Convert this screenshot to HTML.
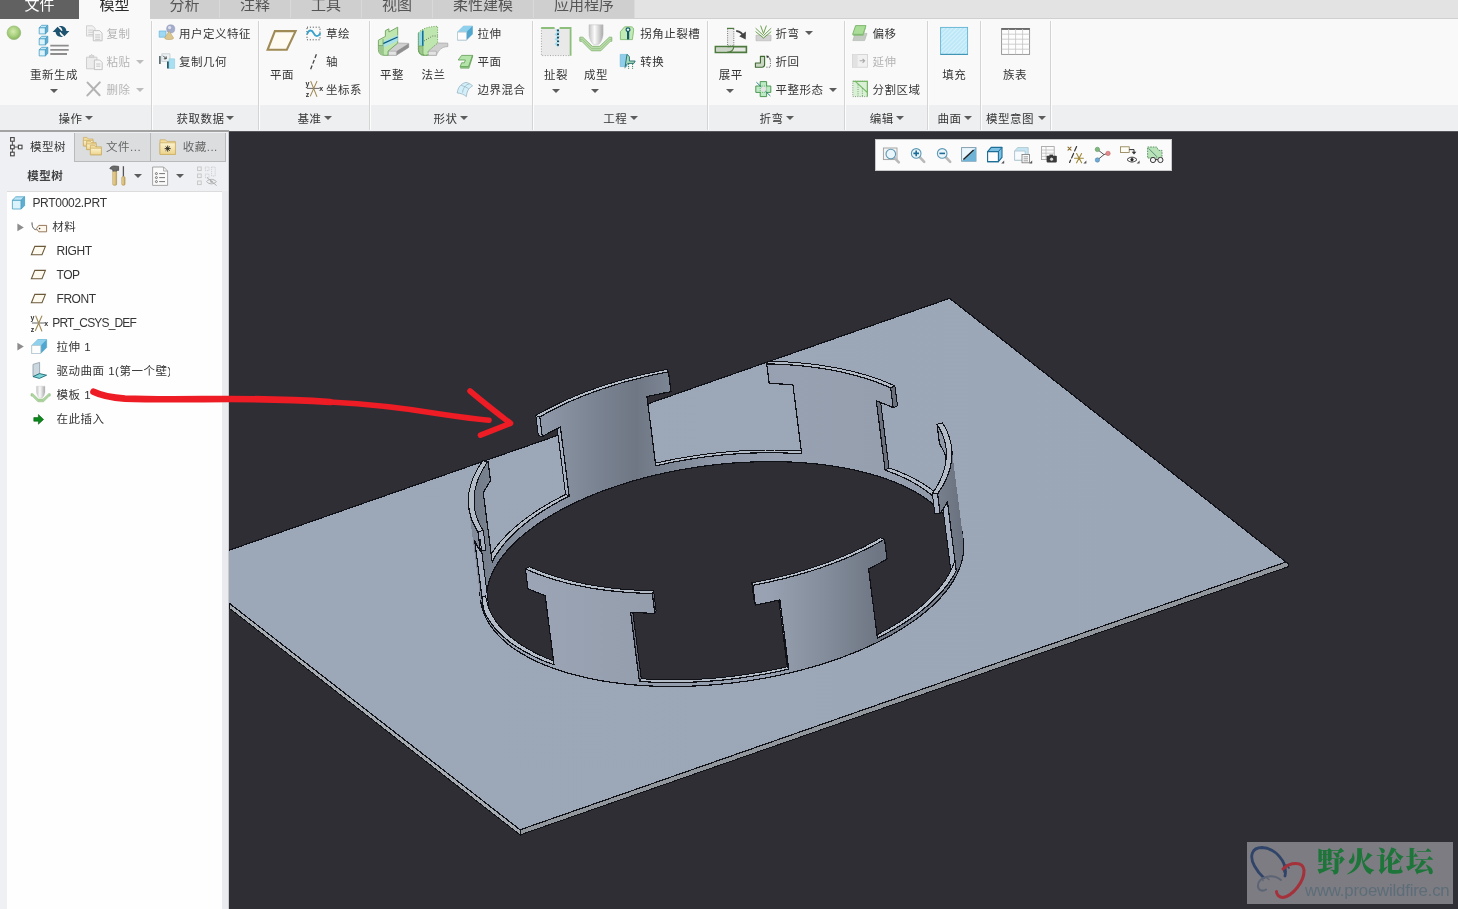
<!DOCTYPE html>
<html lang="zh-CN"><head><meta charset="utf-8"><title>Creo Parametric</title>
<style>
*{box-sizing:border-box;margin:0;padding:0}
html,body{width:1458px;height:909px;overflow:hidden;background:#2f2e34;}
body{position:relative;will-change:transform;font-family:"Liberation Sans", "Noto Sans CJK SC", sans-serif;font-size:12px;color:#333;}
.abs{position:absolute}
.t{position:absolute;white-space:nowrap;line-height:16px;height:16px;color:#353535;font-size:11.5px;letter-spacing:0.5px}
.tc{transform:translateX(-50%)}
.g{color:#b4b4b4}
.tab{position:absolute;top:0;height:18.5px;font-size:15px;line-height:20px;text-align:center;color:#5a5a5a;overflow:hidden}
.tab span{position:relative;top:-5px;display:block}
.sep{position:absolute;top:21px;width:1px;height:109px;background:#d4d4d4}
.sep2{position:absolute;top:21px;width:1px;height:109px;background:#fdfdfd}
.dd{position:absolute;width:0;height:0;border-left:4px solid transparent;border-right:4px solid transparent;border-top:4.5px solid #5c5c5c;margin-left:-0.5px}
.dd.gd{border-top-color:#bdbdbd}
svg{position:absolute;left:0;top:0;overflow:visible}
</style></head>
<body>
<div class="abs" style="left:0;top:0;width:1458px;height:18.5px;background:#e3e3e3"></div>
<div class="tab" style="left:0px;width:79px;background:#616161;color:#ffffff;"><span>文件</span></div>
<div class="tab" style="left:79px;width:71px;background:#f9f9f9;color:#2b2b2b;"><span>模型</span></div>
<div class="tab" style="left:150px;width:70px;background:#cfcfcf;color:#555;border-right:1px solid #d9d9d9;"><span>分析</span></div>
<div class="tab" style="left:220px;width:71px;background:#cfcfcf;color:#555;border-right:1px solid #d9d9d9;"><span>注释</span></div>
<div class="tab" style="left:291px;width:71px;background:#cfcfcf;color:#555;border-right:1px solid #d9d9d9;"><span>工具</span></div>
<div class="tab" style="left:362px;width:71px;background:#cfcfcf;color:#555;border-right:1px solid #d9d9d9;"><span>视图</span></div>
<div class="tab" style="left:433px;width:101px;background:#cfcfcf;color:#555;border-right:1px solid #d9d9d9;"><span>柔性建模</span></div>
<div class="tab" style="left:534px;width:101px;background:#cfcfcf;color:#555;border-right:1px solid #d9d9d9;"><span>应用程序</span></div>
<div class="abs" style="left:0;top:18.5px;width:1458px;height:87.5px;background:#f9f9f9"></div>
<div class="abs" style="left:0;top:105px;width:1458px;height:26px;background:#eeeff1"></div>
<div class="abs" style="left:0;top:130px;width:229px;height:2px;background:#a3a3a3"></div>
<div class="abs" style="left:229px;top:131px;width:1229px;height:1px;background:#55555a"></div>
<div class="abs" style="left:150px;top:18px;width:1308px;height:1px;background:#d0d0d0"></div>
<div class="sep" style="left:151px"></div><div class="sep2" style="left:152px"></div>
<div class="sep" style="left:258px"></div><div class="sep2" style="left:259px"></div>
<div class="sep" style="left:369px"></div><div class="sep2" style="left:370px"></div>
<div class="sep" style="left:532px"></div><div class="sep2" style="left:533px"></div>
<div class="sep" style="left:707px"></div><div class="sep2" style="left:708px"></div>
<div class="sep" style="left:844px"></div><div class="sep2" style="left:845px"></div>
<div class="sep" style="left:927px"></div><div class="sep2" style="left:928px"></div>
<div class="sep" style="left:980px"></div><div class="sep2" style="left:981px"></div>
<div class="sep" style="left:1050px"></div><div class="sep2" style="left:1051px"></div>
<div class="t  tc" style="left:54.0px;top:67.0px;">重新生成</div>
<div class="dd" style="left:50.0px;top:88.7px"></div>
<div class="t g" style="left:106.5px;top:26.0px;">复制</div>
<div class="t g" style="left:106.5px;top:54.0px;">粘贴</div>
<div class="dd gd" style="left:136.5px;top:60.0px"></div>
<div class="t g" style="left:106.5px;top:82.0px;">删除</div>
<div class="dd gd" style="left:136.5px;top:87.5px"></div>
<div class="t" style="left:58.5px;top:111.0px;">操作</div>
<div class="dd" style="left:85.1px;top:116.0px"></div>
<div class="t" style="left:178.9px;top:26.0px;">用户定义特征</div>
<div class="t" style="left:178.9px;top:54.0px;">复制几何</div>
<div class="t" style="left:176.5px;top:111.0px;">获取数据</div>
<div class="dd" style="left:226.5px;top:116.0px"></div>
<div class="t  tc" style="left:282.0px;top:67.0px;">平面</div>
<div class="t" style="left:326.0px;top:26.0px;">草绘</div>
<div class="t" style="left:326.0px;top:54.0px;">轴</div>
<div class="t" style="left:326.0px;top:82.0px;">坐标系</div>
<div class="t" style="left:297.6px;top:111.0px;">基准</div>
<div class="dd" style="left:324.1px;top:116.0px"></div>
<div class="t  tc" style="left:392.0px;top:67.0px;">平整</div>
<div class="t  tc" style="left:433.4px;top:67.0px;">法兰</div>
<div class="t" style="left:477.4px;top:26.0px;">拉伸</div>
<div class="t" style="left:477.4px;top:54.0px;">平面</div>
<div class="t" style="left:477.4px;top:82.0px;">边界混合</div>
<div class="t" style="left:433.6px;top:111.0px;">形状</div>
<div class="dd" style="left:460.8px;top:116.0px"></div>
<div class="t  tc" style="left:556.0px;top:67.0px;">扯裂</div>
<div class="dd" style="left:552.0px;top:89.0px"></div>
<div class="t  tc" style="left:595.9px;top:67.0px;">成型</div>
<div class="dd" style="left:591.7px;top:89.0px"></div>
<div class="t" style="left:640.3px;top:26.0px;">拐角止裂槽</div>
<div class="t" style="left:640.3px;top:54.0px;">转换</div>
<div class="t" style="left:603.3px;top:111.0px;">工程</div>
<div class="dd" style="left:630.1px;top:116.0px"></div>
<div class="t  tc" style="left:730.8px;top:67.0px;">展平</div>
<div class="dd" style="left:726.7px;top:89.0px"></div>
<div class="t" style="left:775.4px;top:26.0px;">折弯</div>
<div class="dd" style="left:805.7px;top:31.0px"></div>
<div class="t" style="left:775.4px;top:54.0px;">折回</div>
<div class="t" style="left:775.4px;top:82.0px;">平整形态</div>
<div class="dd" style="left:829.7px;top:87.5px"></div>
<div class="t" style="left:759.4px;top:111.0px;">折弯</div>
<div class="dd" style="left:786.1px;top:116.0px"></div>
<div class="t" style="left:872.6px;top:26.0px;">偏移</div>
<div class="t g" style="left:872.6px;top:54.0px;">延伸</div>
<div class="t" style="left:872.6px;top:82.0px;">分割区域</div>
<div class="t" style="left:869.7px;top:111.0px;">编辑</div>
<div class="dd" style="left:896.0px;top:116.0px"></div>
<div class="t  tc" style="left:954.2px;top:67.0px;">填充</div>
<div class="t" style="left:937.5px;top:111.0px;">曲面</div>
<div class="dd" style="left:964.1px;top:116.0px"></div>
<div class="t  tc" style="left:1014.9px;top:67.0px;">族表</div>
<div class="t" style="left:985.9px;top:111.0px;">模型意图</div>
<div class="dd" style="left:1038.1px;top:116.0px"></div>
<div class="abs" style="left:0;top:132px;width:229px;height:777px;background:#eef0f3"></div>
<div class="abs" style="left:74px;top:133px;width:152px;height:29px;background:#dcdddf;border:1px solid #b9babc;border-top:none"></div>
<div class="abs" style="left:150px;top:133px;width:1px;height:28px;background:#b9babc"></div>
<div class="abs" style="left:7px;top:191px;width:215px;height:718px;background:#fefefe;border-top:1px solid #dcdcdc"></div>
<div class="abs" style="left:222px;top:191px;width:7px;height:718px;background:#e9ebee"></div>
<div class="abs" style="left:228px;top:132px;width:1px;height:777px;background:#c8cacf"></div>
<div class="t" style="left:30.1px;top:139.0px;">模型树</div>
<div class="t" style="left:106.0px;top:139.0px;color:#666">文件...</div>
<div class="t" style="left:182.7px;top:139.0px;color:#666">收藏...</div>
<div class="t" style="left:27.2px;top:168.0px;font-weight:bold;color:#444">模型树</div>
<div class="dd" style="left:134.8px;top:174.0px"></div>
<div class="dd" style="left:176.7px;top:174.0px"></div>
<div class="t" style="left:32.4px;top:194.5px;font-size:12px;letter-spacing:-0.3px;">PRT0002.PRT</div>
<div class="t" style="left:52.3px;top:219.0px;">材料</div>
<div class="t" style="left:56.5px;top:242.5px;font-size:12px;letter-spacing:-0.45px;">RIGHT</div>
<div class="t" style="left:56.5px;top:266.5px;font-size:12px;letter-spacing:-0.45px;">TOP</div>
<div class="t" style="left:56.5px;top:290.5px;font-size:12px;letter-spacing:-0.45px;">FRONT</div>
<div class="t" style="left:52.3px;top:314.5px;font-size:12px;letter-spacing:-0.85px;">PRT_CSYS_DEF</div>
<div class="t" style="left:56.5px;top:339.0px;">拉伸 1</div>
<div class="t" style="left:56.5px;top:363.0px;width:113px;overflow:hidden;">驱动曲面 1(第一个壁)</div>
<div class="t" style="left:56.5px;top:387.0px;">模板 1</div>
<div class="t" style="left:56.5px;top:411.0px;">在此插入</div>
<div class="abs" style="left:875px;top:139px;width:297px;height:32px;background:#fbfbfb;border:1px solid #c9c9c9"></div>
<div class="abs" style="left:1247px;top:842px;width:206px;height:62px;background:#7c7c82"></div>
<div class="abs" style="left:1317px;top:845px;font-family:'Liberation Serif','Noto Serif CJK SC',serif;font-weight:900;font-size:28px;line-height:36px;color:#1d7539;white-space:nowrap;letter-spacing:1.5px">野火论坛</div>
<div class="abs" style="left:1305px;top:880px;font-size:16.8px;line-height:22px;color:#5d6d78;white-space:nowrap;letter-spacing:-0.2px">www.proewildfire.cn</div>
<svg width="1458" height="909" viewBox="0 0 1458 909">
<defs>
<linearGradient id="gPlate" gradientUnits="userSpaceOnUse" x1="229" y1="0" x2="1290" y2="0">
<stop offset="0" stop-color="#9ca7b8"/><stop offset="1" stop-color="#9ba6b7"/></linearGradient>
<linearGradient id="gInner" gradientUnits="userSpaceOnUse" x1="460" y1="0" x2="970" y2="0">
<stop offset="0" stop-color="#6d7582"/>
<stop offset="0.07" stop-color="#7b8492"/>
<stop offset="0.16" stop-color="#8e98a8"/>
<stop offset="0.27" stop-color="#7a8391"/>
<stop offset="0.345" stop-color="#6f7785"/>
<stop offset="0.41" stop-color="#7c8593"/>
<stop offset="0.50" stop-color="#8f99a9"/>
<stop offset="0.62" stop-color="#97a1b1"/>
<stop offset="0.85" stop-color="#959fae"/>
<stop offset="1" stop-color="#8c95a4"/>
</linearGradient>
<linearGradient id="gOuter" gradientUnits="userSpaceOnUse" x1="460" y1="0" x2="970" y2="0">
<stop offset="0" stop-color="#7a8290"/>
<stop offset="0.12" stop-color="#9ba5b5"/>
<stop offset="0.40" stop-color="#939dac"/>
<stop offset="0.60" stop-color="#98a2b2"/>
<stop offset="0.72" stop-color="#838c9a"/>
<stop offset="0.82" stop-color="#6e7684"/>
<stop offset="0.93" stop-color="#7a8290"/>
<stop offset="1" stop-color="#656c79"/>
</linearGradient>
</defs>
<defs><clipPath id="vpclip"><rect x="229" y="132" width="1229" height="777"/></clipPath>
<radialGradient id="gGreen" cx="0.45" cy="0.4" r="0.6"><stop offset="0" stop-color="#d4eab0"/><stop offset="0.6" stop-color="#a8d07c"/><stop offset="1" stop-color="#86b260"/></radialGradient>
<linearGradient id="gPunch" x1="0" y1="0" x2="1" y2="0"><stop offset="0" stop-color="#c4c4c4"/><stop offset="0.4" stop-color="#fbfbfb"/><stop offset="1" stop-color="#a9a9a9"/></linearGradient>
<linearGradient id="gBlueSq" x1="0" y1="0" x2="1" y2="1"><stop offset="0" stop-color="#c6ecfa"/><stop offset="1" stop-color="#a9e0f5"/></linearGradient>
<linearGradient id="gHandle" x1="0" y1="0" x2="1" y2="0"><stop offset="0" stop-color="#f3dfa4"/><stop offset="1" stop-color="#c9a75c"/></linearGradient>
<linearGradient id="gFolder" x1="0" y1="0" x2="0" y2="1"><stop offset="0" stop-color="#fdf3cf"/><stop offset="1" stop-color="#ecd38b"/></linearGradient>
<pattern id="hatch" width="3" height="3" patternUnits="userSpaceOnUse" patternTransform="rotate(45)"><rect width="3" height="3" fill="#bde8f7"/><rect width="1" height="3" fill="#d6f1fb"/></pattern>
</defs>
<g clip-path="url(#vpclip)" shape-rendering="crispEdges">
<path d="M229.0 603.1 L520.1 829.8 L520.1 834.9 L229.0 608.0 Z" fill="#a7abb2" stroke="#101017" stroke-width="1"/>
<path d="M520.1 829.8 L1286.0 562.0 L1288.6 563.7 L1288.6 566.6 L520.1 834.9 Z" fill="#92969d" stroke="#101017" stroke-width="1"/>
<path d="M228.0 550.6 L949.6 298.3 L1286.0 562.0 L520.1 829.8 L228.0 602.3 Z M930.2 497.4 L932.1 499.0 L934.0 500.5 L935.8 502.1 L937.5 503.7 L939.1 505.3 L940.7 507.0 L942.3 508.6 L943.7 510.3 L945.1 512.0 L946.4 513.7 L947.7 515.4 L948.8 517.2 L950.0 518.9 L951.0 520.7 L952.0 522.5 L952.9 524.3 L953.7 526.1 L954.5 527.9 L955.2 529.8 L955.8 531.6 L956.3 533.5 L956.8 535.4 L957.2 537.3 L957.5 539.2 L957.8 541.1 L958.0 543.0 L958.1 545.0 L958.2 546.9 L958.1 548.8 L958.0 550.8 L957.9 552.7 L957.6 554.7 L957.3 556.7 L956.9 558.6 L956.5 560.6 L956.0 562.6 L955.4 564.6 L954.7 566.5 L953.9 568.5 L953.1 570.5 L952.3 572.5 L951.3 574.5 L950.3 576.5 L949.2 578.4 L948.0 580.4 L946.8 582.4 L945.5 584.4 L944.1 586.3 L942.7 588.3 L941.2 590.2 L939.6 592.2 L938.0 594.1 L936.3 596.1 L934.5 598.0 L932.7 599.9 L930.8 601.8 L928.9 603.7 L926.8 605.6 L924.8 607.5 L922.6 609.3 L920.4 611.2 L918.1 613.0 L915.8 614.9 L913.4 616.7 L911.0 618.5 L908.5 620.3 L905.9 622.0 L903.3 623.8 L900.6 625.5 L897.9 627.3 L895.1 629.0 L892.3 630.7 L889.4 632.3 L886.5 634.0 L883.5 635.6 L880.5 637.2 L877.4 638.8 L874.3 640.4 L871.1 641.9 L867.9 643.5 L864.6 645.0 L861.3 646.4 L858.0 647.9 L854.6 649.3 L851.1 650.7 L847.7 652.1 L844.2 653.5 L840.6 654.8 L837.0 656.1 L833.4 657.4 L829.8 658.7 L826.1 659.9 L822.4 661.1 L818.6 662.3 L814.8 663.4 L811.0 664.6 L807.2 665.6 L803.4 666.7 L799.5 667.7 L795.6 668.7 L791.6 669.7 L787.7 670.7 L783.7 671.6 L779.7 672.4 L775.7 673.3 L771.7 674.1 L767.7 674.9 L763.6 675.6 L759.6 676.4 L755.5 677.1 L751.4 677.7 L747.3 678.3 L743.2 678.9 L739.1 679.5 L735.0 680.0 L730.9 680.5 L726.7 681.0 L722.6 681.4 L718.5 681.8 L714.4 682.1 L710.2 682.5 L706.1 682.8 L702.0 683.0 L697.9 683.2 L693.8 683.4 L689.7 683.6 L685.7 683.7 L681.6 683.8 L677.5 683.8 L673.5 683.8 L669.5 683.8 L665.5 683.7 L661.5 683.6 L657.5 683.5 L653.5 683.4 L649.6 683.2 L645.7 682.9 L641.8 682.7 L637.9 682.4 L634.1 682.0 L630.3 681.7 L626.5 681.3 L622.7 680.8 L619.0 680.4 L615.3 679.9 L611.7 679.3 L608.0 678.8 L604.4 678.2 L600.9 677.5 L597.4 676.9 L593.9 676.2 L590.4 675.4 L587.0 674.7 L583.7 673.9 L580.3 673.1 L577.1 672.2 L573.8 671.3 L570.6 670.4 L567.5 669.4 L564.4 668.5 L561.4 667.5 L558.4 666.4 L555.4 665.3 L552.5 664.2 L549.7 663.1 L546.9 662.0 L544.1 660.8 L541.5 659.6 L538.8 658.3 L536.3 657.1 L533.7 655.8 L531.3 654.5 L528.9 653.1 L526.5 651.8 L524.2 650.4 L522.0 648.9 L519.9 647.5 L517.8 646.0 L515.7 644.5 L513.7 643.0 L511.8 641.5 L510.0 640.0 L508.2 638.4 L506.5 636.8 L504.8 635.2 L503.2 633.5 L501.7 631.9 L500.3 630.2 L498.9 628.5 L497.5 626.8 L496.3 625.1 L495.1 623.3 L494.0 621.6 L493.0 619.8 L492.0 618.0 L491.1 616.2 L490.3 614.4 L489.5 612.5 L488.8 610.7 L488.2 608.8 L487.6 607.0 L487.2 605.1 L486.7 603.2 L486.4 601.3 L486.2 599.4 L486.0 597.5 L485.8 595.5 L485.8 593.6 L485.8 591.6 L485.9 589.7 L486.1 587.7 L486.3 585.8 L486.6 583.8 L487.0 581.8 L487.5 579.9 L488.0 577.9 L488.6 575.9 L489.3 573.9 L490.0 572.0 L490.8 570.0 L491.7 568.0 L492.7 566.0 L493.7 564.0 L494.8 562.0 L495.9 560.1 L497.2 558.1 L498.5 556.1 L499.8 554.2 L501.3 552.2 L502.8 550.2 L504.3 548.3 L506.0 546.4 L507.7 544.4 L509.4 542.5 L511.3 540.6 L513.1 538.7 L515.1 536.8 L517.1 534.9 L519.2 533.0 L521.3 531.1 L523.6 529.3 L525.8 527.4 L528.1 525.6 L530.5 523.8 L533.0 522.0 L535.5 520.2 L538.0 518.4 L540.6 516.7 L543.3 514.9 L546.0 513.2 L548.8 511.5 L551.6 509.8 L554.5 508.2 L557.5 506.5 L560.4 504.9 L563.5 503.3 L566.6 501.7 L569.7 500.1 L572.9 498.6 L576.1 497.0 L579.3 495.5 L582.6 494.0 L586.0 492.6 L589.4 491.1 L592.8 489.7 L596.3 488.4 L599.8 487.0 L603.3 485.7 L606.9 484.3 L610.5 483.1 L614.2 481.8 L617.9 480.6 L621.6 479.4 L625.3 478.2 L629.1 477.0 L632.9 475.9 L636.7 474.8 L640.6 473.8 L644.5 472.7 L648.4 471.7 L652.3 470.8 L656.3 469.8 L660.2 468.9 L664.2 468.0 L668.2 467.2 L672.3 466.4 L676.3 465.6 L680.3 464.8 L684.4 464.1 L688.5 463.4 L692.6 462.8 L696.7 462.1 L700.8 461.5 L704.9 461.0 L709.0 460.5 L713.1 460.0 L717.2 459.5 L721.3 459.1 L725.5 458.7 L729.6 458.3 L733.7 458.0 L737.8 457.7 L741.9 457.5 L746.0 457.3 L750.1 457.1 L754.2 456.9 L758.3 456.8 L762.4 456.7 L766.4 456.7 L770.5 456.7 L774.5 456.7 L778.5 456.7 L782.5 456.8 L786.5 457.0 L790.4 457.1 L794.4 457.3 L798.3 457.5 L802.2 457.8 L806.0 458.1 L809.9 458.4 L813.7 458.8 L817.5 459.2 L821.2 459.6 L824.9 460.1 L828.6 460.6 L832.3 461.1 L835.9 461.7 L839.5 462.3 L843.1 462.9 L846.6 463.6 L850.1 464.3 L853.5 465.0 L856.9 465.8 L860.3 466.6 L863.6 467.4 L866.9 468.3 L870.1 469.2 L873.3 470.1 L876.5 471.0 L879.5 472.0 L882.6 473.0 L885.6 474.1 L888.5 475.1 L891.4 476.2 L894.3 477.4 L897.1 478.5 L899.8 479.7 L902.5 480.9 L905.1 482.1 L907.7 483.4 L910.2 484.7 L912.7 486.0 L915.1 487.4 L917.4 488.7 L919.7 490.1 L921.9 491.5 L924.1 493.0 L926.2 494.4 L928.2 495.9 L930.2 497.4 Z" fill="url(#gPlate)" fill-rule="evenodd" stroke="#101017" stroke-width="1.2"/>
<path d="M485.7 595.9 L485.5 594.0 L485.4 592.0 L485.3 590.1 L485.3 588.2 L485.4 586.2 L485.5 584.2 L485.8 582.3 L486.1 580.3 L486.4 578.4 L486.9 576.4 L487.4 574.4 L488.0 572.4 L488.6 570.4 L489.3 568.5 L490.1 566.5 L491.0 564.5 L491.9 562.5 L492.9 560.5 L494.0 558.6 L495.1 556.6 L496.4 554.6 L497.6 552.6 L499.0 550.7 L500.4 548.7 L501.9 546.8 L503.4 544.8 L505.1 542.9 L506.7 540.9 L508.5 539.0 L510.3 537.1 L512.2 535.2 L514.1 533.3 L516.1 531.4 L518.2 529.5 L520.3 527.6 L522.5 525.8 L524.8 523.9 L527.1 522.1 L529.5 520.3 L531.9 518.5 L534.4 516.7 L536.9 514.9 L539.5 513.1 L542.2 511.4 L544.9 509.7 L547.7 508.0 L550.5 506.3 L553.3 504.6 L556.3 502.9 L559.2 501.3 L562.3 499.7 L565.3 498.1 L568.4 496.5 L571.6 495.0 L574.8 493.4 L578.1 491.9 L581.4 490.4 L584.7 489.0 L588.1 487.5 L591.5 486.1 L595.0 484.7 L598.5 483.4 L602.0 482.0 L605.6 480.7 L609.2 479.4 L612.8 478.1 L616.5 476.9 L620.2 475.7 L624.0 474.5 L627.7 473.4 L631.5 472.2 L635.3 471.1 L639.2 470.1 L643.1 469.0 L647.0 468.0 L650.9 467.0 L654.8 466.1 L658.8 465.2 L662.8 464.3 L666.8 463.4 L670.8 462.6 L674.8 461.8 L678.9 461.1 L682.9 460.3 L687.0 459.6 L691.1 459.0 L695.2 458.3 L699.3 457.7 L703.4 457.2 L707.5 456.6 L711.6 456.1 L715.8 455.7 L719.9 455.2 L724.0 454.8 L728.1 454.5 L732.2 454.1 L736.4 453.8 L740.5 453.6 L744.6 453.4 L748.7 453.2 L752.8 453.0 L756.8 452.9 L760.9 452.8 L765.0 452.7 L769.0 452.7 L773.0 452.7 L777.1 452.8 L781.1 452.9 L785.0 453.0 L789.0 453.1 L792.9 453.3 L796.9 453.5 L800.8 453.8 L804.6 454.1 L808.5 454.4 L812.3 454.8 L816.1 455.2 L819.8 455.6 L823.6 456.0 L827.3 456.5 L830.9 457.1 L834.6 457.6 L838.2 458.2 L841.7 458.8 L845.3 459.5 L848.8 460.2 L852.2 460.9 L855.6 461.7 L859.0 462.4 L862.3 463.3 L865.6 464.1 L868.9 465.0 L872.1 465.9 L875.2 466.9 L878.3 467.8 L881.4 468.8 L884.4 469.9 L887.3 470.9 L890.3 472.0 L893.1 473.1 L895.9 474.3 L898.7 475.5 L901.4 476.7 L904.0 477.9 L906.6 479.2 L909.1 480.4 L911.6 481.8 L914.0 483.1 L916.4 484.5 L918.7 485.8 L920.9 487.2 L923.1 488.7 L925.2 490.1 L927.3 491.6 L929.3 493.1 L931.2 494.7 L933.1 496.2 L934.9 497.8 L936.6 499.4 L938.3 501.0 L939.9 502.6 L941.4 504.3 L942.9 505.9 L944.3 507.6 L945.6 509.3 L946.9 511.1 L948.1 512.8 L949.2 514.6 L950.3 516.3 L951.2 518.1 L952.2 519.9 L953.0 521.7 L953.8 523.6 L954.5 525.4 L955.1 527.3 L955.7 529.1 L956.2 531.0 L956.6 532.9 L957.0 534.8 L957.2 536.7 L962.8 536.0 L962.5 534.0 L962.2 532.1 L961.7 530.2 L961.2 528.2 L960.7 526.3 L960.0 524.4 L959.3 522.5 L958.5 520.7 L957.6 518.8 L956.7 517.0 L955.7 515.1 L954.6 513.3 L953.4 511.5 L952.2 509.7 L950.9 508.0 L949.5 506.2 L948.1 504.5 L946.6 502.8 L945.0 501.1 L943.4 499.4 L941.7 497.8 L939.9 496.2 L938.1 494.6 L936.1 493.0 L934.2 491.4 L932.1 489.9 L930.0 488.3 L927.9 486.9 L925.6 485.4 L923.3 483.9 L921.0 482.5 L918.6 481.1 L916.1 479.8 L913.6 478.4 L911.0 477.1 L908.3 475.8 L905.6 474.5 L902.9 473.3 L900.0 472.1 L897.2 470.9 L894.2 469.8 L891.3 468.7 L888.2 467.6 L885.2 466.5 L882.0 465.5 L878.9 464.5 L875.6 463.5 L872.4 462.6 L869.0 461.7 L865.7 460.8 L862.3 460.0 L858.8 459.2 L855.3 458.4 L851.8 457.7 L848.2 457.0 L844.6 456.3 L840.9 455.7 L837.3 455.0 L833.5 454.5 L829.8 453.9 L826.0 453.4 L822.2 453.0 L818.3 452.5 L814.4 452.1 L810.5 451.8 L806.6 451.4 L802.6 451.1 L798.6 450.9 L794.6 450.6 L790.6 450.4 L786.5 450.3 L782.5 450.2 L778.4 450.1 L774.3 450.0 L770.1 450.0 L766.0 450.0 L761.8 450.1 L757.7 450.2 L753.5 450.3 L749.3 450.5 L745.1 450.7 L740.9 450.9 L736.7 451.2 L732.5 451.5 L728.3 451.8 L724.1 452.2 L719.8 452.6 L715.6 453.0 L711.4 453.5 L707.2 454.0 L703.0 454.6 L698.8 455.2 L694.6 455.8 L690.4 456.4 L686.2 457.1 L682.0 457.8 L677.9 458.6 L673.7 459.3 L669.6 460.2 L665.5 461.0 L661.4 461.9 L657.3 462.8 L653.3 463.7 L649.2 464.7 L645.2 465.7 L641.2 466.7 L637.2 467.8 L633.3 468.9 L629.4 470.0 L625.5 471.2 L621.6 472.3 L617.8 473.6 L614.0 474.8 L610.3 476.1 L606.5 477.4 L602.8 478.7 L599.2 480.0 L595.6 481.4 L592.0 482.8 L588.4 484.2 L584.9 485.7 L581.5 487.1 L578.0 488.6 L574.7 490.2 L571.3 491.7 L568.1 493.3 L564.8 494.9 L561.6 496.5 L558.5 498.1 L555.4 499.8 L552.4 501.4 L549.4 503.1 L546.4 504.8 L543.5 506.6 L540.7 508.3 L537.9 510.1 L535.2 511.9 L532.6 513.7 L530.0 515.5 L527.4 517.3 L524.9 519.2 L522.5 521.0 L520.1 522.9 L517.8 524.8 L515.6 526.7 L513.4 528.6 L511.3 530.5 L509.2 532.5 L507.2 534.4 L505.3 536.4 L503.5 538.4 L501.7 540.3 L499.9 542.3 L498.3 544.3 L496.7 546.3 L495.2 548.3 L493.7 550.3 L492.4 552.3 L491.0 554.3 L489.8 556.4 L488.6 558.4 L487.5 560.4 L486.5 562.4 L485.5 564.5 L484.7 566.5 L483.8 568.5 L483.1 570.5 L482.4 572.6 L481.8 574.6 L481.3 576.6 L480.9 578.6 L480.5 580.7 L480.2 582.7 L480.0 584.7 L479.8 586.7 L479.7 588.7 L479.7 590.7 L479.8 592.6 L479.9 594.6 L480.1 596.6 Z" fill="#b4bcc8" stroke="#101017" stroke-width="1"/>
<path d="M539.8 416.9 L542.7 415.3 L545.6 413.6 L548.6 412.0 L551.6 410.4 L554.7 408.8 L557.9 407.2 L561.0 405.7 L564.2 404.1 L567.5 402.6 L570.8 401.1 L574.2 399.7 L577.6 398.3 L581.0 396.8 L584.5 395.5 L588.0 394.1 L591.5 392.8 L595.1 391.5 L598.7 390.2 L602.4 388.9 L606.1 387.7 L609.8 386.5 L613.5 385.3 L617.3 384.2 L621.1 383.0 L624.9 381.9 L628.8 380.9 L632.7 379.9 L636.6 378.9 L640.5 377.9 L644.4 376.9 L648.4 376.0 L652.4 375.1 L656.4 374.3 L660.4 373.5 L664.5 372.7 L668.5 371.9 L667.5 369.4 L663.4 370.2 L659.3 371.0 L655.1 371.9 L651.0 372.7 L647.0 373.6 L642.9 374.6 L638.9 375.5 L634.8 376.5 L630.8 377.5 L626.9 378.6 L622.9 379.7 L619.0 380.8 L615.1 382.0 L611.2 383.1 L607.4 384.3 L603.6 385.6 L599.8 386.8 L596.1 388.1 L592.4 389.4 L588.7 390.8 L585.1 392.1 L581.5 393.5 L577.9 394.9 L574.4 396.4 L571.0 397.9 L567.5 399.3 L564.1 400.9 L560.8 402.4 L557.5 404.0 L554.3 405.6 L551.1 407.2 L547.9 408.8 L544.8 410.4 L541.7 412.1 L538.7 413.8 L535.8 415.5 Z" fill="#b4bcc8" stroke="#101017" stroke-width="1"/>
<path d="M542.3 436.7 L539.8 416.9 L535.8 415.5 L538.3 435.3 Z" fill="#a6b0c0" stroke="#101017" stroke-width="1.05" stroke-linejoin="round"/>
<path d="M569.2 496.1 L560.4 427.0 L556.8 425.3 L565.6 494.5 Z" fill="#a6b0c0" stroke="#101017" stroke-width="1.05" stroke-linejoin="round"/>
<path d="M766.7 363.9 L770.7 363.9 L774.6 364.1 L778.6 364.2 L782.5 364.4 L786.5 364.7 L790.3 364.9 L794.2 365.2 L798.0 365.5 L801.9 365.9 L805.6 366.3 L809.4 366.7 L813.1 367.2 L816.8 367.7 L820.5 368.2 L824.1 368.8 L827.7 369.4 L831.3 370.0 L834.8 370.7 L838.3 371.4 L841.7 372.1 L845.1 372.9 L848.5 373.7 L851.8 374.5 L855.1 375.4 L858.3 376.3 L861.5 377.2 L864.6 378.1 L867.7 379.1 L870.8 380.1 L873.8 381.2 L876.7 382.2 L879.6 383.3 L882.5 384.5 L885.3 385.6 L888.0 386.8 L890.7 388.0 L894.9 385.9 L892.2 384.7 L889.4 383.5 L886.5 382.3 L883.6 381.1 L880.7 380.0 L877.6 378.9 L874.6 377.8 L871.4 376.8 L868.3 375.8 L865.1 374.8 L861.8 373.9 L858.5 373.0 L855.1 372.1 L851.7 371.3 L848.3 370.4 L844.8 369.7 L841.3 368.9 L837.7 368.2 L834.1 367.5 L830.5 366.9 L826.8 366.2 L823.1 365.7 L819.3 365.1 L815.6 364.6 L811.7 364.1 L807.9 363.7 L804.0 363.3 L800.1 362.9 L796.2 362.6 L792.2 362.3 L788.3 362.0 L784.3 361.8 L780.2 361.6 L776.2 361.4 L772.1 361.3 L768.0 361.2 Z" fill="#b4bcc8" stroke="#101017" stroke-width="1"/>
<path d="M893.2 407.8 L890.7 388.0 L894.9 385.9 L897.5 405.7 Z" fill="#6a717c" stroke="#101017" stroke-width="1.05" stroke-linejoin="round"/>
<path d="M885.1 470.1 L876.3 400.9 L880.2 398.7 L889.0 467.8 Z" fill="#6a717c" stroke="#101017" stroke-width="1.05" stroke-linejoin="round"/>
<path d="M486.8 604.8 L486.6 602.8 L486.5 600.9 L486.4 599.0 L486.4 597.0 L486.5 595.1 L486.7 593.1 L486.9 591.2 L487.2 589.2 L487.6 587.2 L488.0 585.3 L488.5 583.3 L489.1 581.3 L489.7 579.3 L490.5 577.4 L491.3 575.4 L492.1 573.4 L493.1 571.4 L494.1 569.4 L495.1 567.5 L496.3 565.5 L497.5 563.5 L498.8 561.5 L500.1 559.6 L501.5 557.6 L503.0 555.7 L504.6 553.7 L506.2 551.8 L507.9 549.8 L509.6 547.9 L511.4 546.0 L513.3 544.1 L515.3 542.2 L517.3 540.3 L519.3 538.4 L521.5 536.5 L523.7 534.7 L525.9 532.8 L528.2 531.0 L530.6 529.2 L533.0 527.4 L535.5 525.6 L538.1 523.8 L540.7 522.0 L543.3 520.3 L546.0 518.6 L548.8 516.9 L551.6 515.2 L554.5 513.5 L557.4 511.8 L560.4 510.2 L563.4 508.6 L566.5 507.0 L569.6 505.4 L572.7 503.9 L575.9 502.3 L579.2 500.8 L582.5 499.3 L585.8 497.9 L589.2 496.4 L592.6 495.0 L596.1 493.6 L599.6 492.2 L603.1 490.9 L606.7 489.6 L610.3 488.3 L614.0 487.0 L617.6 485.8 L621.3 484.6 L625.1 483.4 L628.9 482.3 L632.6 481.1 L636.5 480.0 L640.3 479.0 L644.2 477.9 L648.1 476.9 L652.0 475.9 L656.0 475.0 L659.9 474.1 L663.9 473.2 L667.9 472.3 L671.9 471.5 L676.0 470.7 L680.0 469.9 L684.1 469.2 L688.2 468.5 L692.2 467.9 L696.3 467.2 L700.4 466.6 L704.5 466.1 L708.6 465.5 L712.8 465.0 L716.9 464.6 L721.0 464.1 L725.1 463.7 L729.3 463.4 L733.4 463.0 L737.5 462.7 L741.6 462.5 L745.7 462.2 L749.8 462.1 L753.9 461.9 L758.0 461.8 L762.0 461.7 L766.1 461.6 L770.1 461.6 L774.2 461.6 L778.2 461.7 L782.2 461.7 L786.2 461.9 L790.1 462.0 L794.1 462.2 L798.0 462.4 L801.9 462.7 L805.8 463.0 L809.6 463.3 L813.4 463.7 L817.2 464.0 L821.0 464.5 L824.7 464.9 L828.4 465.4 L832.1 465.9 L835.7 466.5 L839.3 467.1 L842.9 467.7 L846.4 468.4 L849.9 469.1 L853.4 469.8 L856.8 470.6 L860.1 471.3 L863.5 472.2 L866.8 473.0 L870.0 473.9 L873.2 474.8 L876.3 475.7 L879.5 476.7 L882.5 477.7 L885.5 478.8 L888.5 479.8 L891.4 480.9 L894.2 482.0 L897.1 483.2 L899.8 484.4 L902.5 485.6 L905.1 486.8 L907.7 488.0 L910.3 489.3 L912.7 490.6 L915.2 492.0 L917.5 493.3 L919.8 494.7 L922.1 496.1 L924.2 497.6 L926.3 499.0 L928.4 500.5 L930.4 502.0 L932.3 503.6 L934.2 505.1 L936.0 506.7 L937.7 508.3 L939.4 509.9 L941.0 511.5 L942.5 513.2 L944.0 514.8 L945.4 516.5 L946.7 518.2 L948.0 519.9 L949.2 521.7 L950.3 523.4 L951.4 525.2 L952.4 527.0 L953.3 528.8 L954.1 530.6 L954.9 532.5 L955.6 534.3 L956.3 536.2 L956.8 538.0 L957.3 539.9 L957.8 541.8 L958.1 543.7 L958.4 545.6 L945.9 447.8 L945.9 447.8 L945.6 445.7 L945.2 443.7 L944.8 441.7 L944.2 439.7 L943.6 437.7 L942.9 435.8 L942.1 433.8 L941.3 431.9 L940.3 429.9 L939.3 428.0 L938.2 426.1 L937.0 424.3 L939.5 444.0 L939.5 444.0 L940.6 445.8 L941.7 447.6 L942.7 449.4 L943.6 451.2 L944.4 453.0 L945.2 454.8 L954.0 524.0 L954.0 524.0 L953.2 522.2 L952.4 520.3 L951.5 518.5 L950.5 516.7 L949.5 515.0 L948.3 513.2 L947.2 511.5 L945.9 509.7 L944.6 508.0 L943.2 506.3 L941.7 504.7 L940.2 503.0 L938.6 501.4 L937.0 499.7 L935.3 498.2 L933.5 496.6 L931.6 495.0 L929.7 493.5 L927.7 492.0 L925.7 490.5 L923.6 489.0 L921.4 487.6 L919.2 486.2 L916.9 484.8 L914.6 483.4 L912.2 482.1 L909.7 480.7 L907.2 479.5 L904.6 478.2 L902.0 477.0 L899.3 475.7 L896.6 474.6 L893.8 473.4 L890.9 472.3 L888.0 471.2 L885.1 470.1 L876.3 400.9 L876.3 400.9 L879.2 402.0 L882.1 403.1 L885.0 404.2 L887.8 405.4 L890.5 406.6 L893.2 407.8 L890.7 388.0 L890.7 388.0 L888.0 386.8 L885.3 385.6 L882.5 384.5 L879.6 383.3 L876.7 382.2 L873.8 381.2 L870.8 380.1 L867.7 379.1 L864.6 378.1 L861.5 377.2 L858.3 376.3 L855.1 375.4 L851.8 374.5 L848.5 373.7 L845.1 372.9 L841.7 372.1 L838.3 371.4 L834.8 370.7 L831.3 370.0 L827.7 369.4 L824.1 368.8 L820.5 368.2 L816.8 367.7 L813.1 367.2 L809.4 366.7 L805.6 366.3 L801.9 365.9 L798.0 365.5 L794.2 365.2 L790.3 364.9 L786.5 364.7 L782.5 364.4 L778.6 364.2 L774.6 364.1 L770.7 363.9 L766.7 363.9 L769.2 383.6 L769.2 383.6 L773.2 383.7 L777.2 383.8 L781.1 384.0 L785.1 384.2 L789.0 384.4 L792.9 384.7 L801.7 453.9 L801.7 453.9 L797.8 453.6 L793.9 453.4 L789.9 453.2 L786.0 453.0 L782.0 452.9 L778.0 452.8 L774.0 452.7 L770.0 452.7 L765.9 452.7 L761.9 452.8 L757.8 452.9 L753.7 453.0 L749.6 453.1 L745.5 453.3 L741.4 453.5 L737.3 453.8 L733.2 454.1 L729.1 454.4 L725.0 454.7 L720.8 455.1 L716.7 455.6 L712.6 456.0 L708.5 456.5 L704.4 457.0 L700.3 457.6 L696.2 458.2 L692.1 458.8 L688.0 459.5 L683.9 460.2 L679.8 460.9 L675.8 461.6 L671.8 462.4 L667.7 463.2 L663.7 464.1 L659.7 465.0 L655.8 465.9 L647.0 396.7 L647.0 396.7 L650.9 395.8 L654.9 394.9 L658.9 394.1 L662.9 393.2 L667.0 392.5 L671.0 391.7 L668.5 371.9 L668.5 371.9 L664.5 372.7 L660.4 373.5 L656.4 374.3 L652.4 375.1 L648.4 376.0 L644.4 376.9 L640.5 377.9 L636.6 378.9 L632.7 379.9 L628.8 380.9 L624.9 381.9 L621.1 383.0 L617.3 384.2 L613.5 385.3 L609.8 386.5 L606.1 387.7 L602.4 388.9 L598.7 390.2 L595.1 391.5 L591.5 392.8 L588.0 394.1 L584.5 395.5 L581.0 396.8 L577.6 398.3 L574.2 399.7 L570.8 401.1 L567.5 402.6 L564.2 404.1 L561.0 405.7 L557.9 407.2 L554.7 408.8 L551.6 410.4 L548.6 412.0 L545.6 413.6 L542.7 415.3 L539.8 416.9 L542.3 436.7 L542.3 436.7 L545.2 435.0 L548.1 433.4 L551.1 431.7 L554.2 430.1 L557.2 428.5 L560.4 427.0 L569.2 496.1 L569.2 496.1 L566.0 497.7 L563.0 499.3 L559.9 500.9 L557.0 502.6 L554.0 504.2 L551.1 505.9 L548.3 507.6 L545.5 509.3 L542.8 511.0 L540.1 512.7 L537.5 514.5 L535.0 516.3 L532.5 518.0 L530.0 519.8 L527.6 521.7 L525.3 523.5 L523.1 525.3 L520.8 527.2 L518.7 529.1 L516.6 530.9 L514.6 532.8 L512.6 534.7 L510.7 536.6 L508.9 538.5 L507.2 540.5 L505.5 542.4 L503.8 544.3 L502.3 546.3 L500.8 548.3 L499.3 550.2 L498.0 552.2 L496.7 554.1 L495.4 556.1 L494.3 558.1 L493.2 560.1 L492.2 562.1 L483.3 492.9 L483.3 492.9 L484.4 490.9 L485.5 488.9 L486.6 486.9 L487.9 485.0 L489.1 483.0 L490.5 481.0 L488.0 461.3 L488.0 461.3 L486.6 463.3 L485.3 465.2 L484.1 467.2 L482.9 469.2 L481.8 471.2 L480.8 473.2 L479.8 475.2 L478.9 477.2 L478.1 479.2 L477.4 481.2 L476.7 483.2 L476.1 485.2 L475.6 487.2 L475.1 489.2 L474.8 491.2 L474.5 493.2 L474.2 495.2 L474.1 497.2 L474.0 499.1 L474.0 501.1 L474.0 503.0 L474.2 505.0 L474.4 506.9 Z" fill="url(#gInner)" stroke="none"/>
<path d="M486.8 604.8 L486.6 602.8 L486.5 600.9 L486.4 599.0 L486.4 597.0 L486.5 595.1 L486.7 593.1 L486.9 591.2 L487.2 589.2 L487.6 587.2 L488.0 585.3 L488.5 583.3 L489.1 581.3 L489.7 579.3 L490.5 577.4 L491.3 575.4 L492.1 573.4 L493.1 571.4 L494.1 569.4 L495.1 567.5 L496.3 565.5 L497.5 563.5 L498.8 561.5 L500.1 559.6 L501.5 557.6 L503.0 555.7 L504.6 553.7 L506.2 551.8 L507.9 549.8 L509.6 547.9 L511.4 546.0 L513.3 544.1 L515.3 542.2 L517.3 540.3 L519.3 538.4 L521.5 536.5 L523.7 534.7 L525.9 532.8 L528.2 531.0 L530.6 529.2 L533.0 527.4 L535.5 525.6 L538.1 523.8 L540.7 522.0 L543.3 520.3 L546.0 518.6 L548.8 516.9 L551.6 515.2 L554.5 513.5 L557.4 511.8 L560.4 510.2 L563.4 508.6 L566.5 507.0 L569.6 505.4 L572.7 503.9 L575.9 502.3 L579.2 500.8 L582.5 499.3 L585.8 497.9 L589.2 496.4 L592.6 495.0 L596.1 493.6 L599.6 492.2 L603.1 490.9 L606.7 489.6 L610.3 488.3 L614.0 487.0 L617.6 485.8 L621.3 484.6 L625.1 483.4 L628.9 482.3 L632.6 481.1 L636.5 480.0 L640.3 479.0 L644.2 477.9 L648.1 476.9 L652.0 475.9 L656.0 475.0 L659.9 474.1 L663.9 473.2 L667.9 472.3 L671.9 471.5 L676.0 470.7 L680.0 469.9 L684.1 469.2 L688.2 468.5 L692.2 467.9 L696.3 467.2 L700.4 466.6 L704.5 466.1 L708.6 465.5 L712.8 465.0 L716.9 464.6 L721.0 464.1 L725.1 463.7 L729.3 463.4 L733.4 463.0 L737.5 462.7 L741.6 462.5 L745.7 462.2 L749.8 462.1 L753.9 461.9 L758.0 461.8 L762.0 461.7 L766.1 461.6 L770.1 461.6 L774.2 461.6 L778.2 461.7 L782.2 461.7 L786.2 461.9 L790.1 462.0 L794.1 462.2 L798.0 462.4 L801.9 462.7 L805.8 463.0 L809.6 463.3 L813.4 463.7 L817.2 464.0 L821.0 464.5 L824.7 464.9 L828.4 465.4 L832.1 465.9 L835.7 466.5 L839.3 467.1 L842.9 467.7 L846.4 468.4 L849.9 469.1 L853.4 469.8 L856.8 470.6 L860.1 471.3 L863.5 472.2 L866.8 473.0 L870.0 473.9 L873.2 474.8 L876.3 475.7 L879.5 476.7 L882.5 477.7 L885.5 478.8 L888.5 479.8 L891.4 480.9 L894.2 482.0 L897.1 483.2 L899.8 484.4 L902.5 485.6 L905.1 486.8 L907.7 488.0 L910.3 489.3 L912.7 490.6 L915.2 492.0 L917.5 493.3 L919.8 494.7 L922.1 496.1 L924.2 497.6 L926.3 499.0 L928.4 500.5 L930.4 502.0 L932.3 503.6 L934.2 505.1 L936.0 506.7 L937.7 508.3 L939.4 509.9 L941.0 511.5 L942.5 513.2 L944.0 514.8 L945.4 516.5 L946.7 518.2 L948.0 519.9 L949.2 521.7 L950.3 523.4 L951.4 525.2 L952.4 527.0 L953.3 528.8 L954.1 530.6 L954.9 532.5 L955.6 534.3 L956.3 536.2 L956.8 538.0 L957.3 539.9 L957.8 541.8 L958.1 543.7 L958.4 545.6 M945.9 447.8 L945.9 447.8 L945.6 445.7 L945.2 443.7 L944.8 441.7 L944.2 439.7 L943.6 437.7 L942.9 435.8 L942.1 433.8 L941.3 431.9 L940.3 429.9 L939.3 428.0 L938.2 426.1 L937.0 424.3 L939.5 444.0 L939.5 444.0 L940.6 445.8 L941.7 447.6 L942.7 449.4 L943.6 451.2 L944.4 453.0 L945.2 454.8 L954.0 524.0 L954.0 524.0 L953.2 522.2 L952.4 520.3 L951.5 518.5 L950.5 516.7 L949.5 515.0 L948.3 513.2 L947.2 511.5 L945.9 509.7 L944.6 508.0 L943.2 506.3 L941.7 504.7 L940.2 503.0 L938.6 501.4 L937.0 499.7 L935.3 498.2 L933.5 496.6 L931.6 495.0 L929.7 493.5 L927.7 492.0 L925.7 490.5 L923.6 489.0 L921.4 487.6 L919.2 486.2 L916.9 484.8 L914.6 483.4 L912.2 482.1 L909.7 480.7 L907.2 479.5 L904.6 478.2 L902.0 477.0 L899.3 475.7 L896.6 474.6 L893.8 473.4 L890.9 472.3 L888.0 471.2 L885.1 470.1 L876.3 400.9 L876.3 400.9 L879.2 402.0 L882.1 403.1 L885.0 404.2 L887.8 405.4 L890.5 406.6 L893.2 407.8 L890.7 388.0 L890.7 388.0 L888.0 386.8 L885.3 385.6 L882.5 384.5 L879.6 383.3 L876.7 382.2 L873.8 381.2 L870.8 380.1 L867.7 379.1 L864.6 378.1 L861.5 377.2 L858.3 376.3 L855.1 375.4 L851.8 374.5 L848.5 373.7 L845.1 372.9 L841.7 372.1 L838.3 371.4 L834.8 370.7 L831.3 370.0 L827.7 369.4 L824.1 368.8 L820.5 368.2 L816.8 367.7 L813.1 367.2 L809.4 366.7 L805.6 366.3 L801.9 365.9 L798.0 365.5 L794.2 365.2 L790.3 364.9 L786.5 364.7 L782.5 364.4 L778.6 364.2 L774.6 364.1 L770.7 363.9 L766.7 363.9 L769.2 383.6 L769.2 383.6 L773.2 383.7 L777.2 383.8 L781.1 384.0 L785.1 384.2 L789.0 384.4 L792.9 384.7 L801.7 453.9 L801.7 453.9 L797.8 453.6 L793.9 453.4 L789.9 453.2 L786.0 453.0 L782.0 452.9 L778.0 452.8 L774.0 452.7 L770.0 452.7 L765.9 452.7 L761.9 452.8 L757.8 452.9 L753.7 453.0 L749.6 453.1 L745.5 453.3 L741.4 453.5 L737.3 453.8 L733.2 454.1 L729.1 454.4 L725.0 454.7 L720.8 455.1 L716.7 455.6 L712.6 456.0 L708.5 456.5 L704.4 457.0 L700.3 457.6 L696.2 458.2 L692.1 458.8 L688.0 459.5 L683.9 460.2 L679.8 460.9 L675.8 461.6 L671.8 462.4 L667.7 463.2 L663.7 464.1 L659.7 465.0 L655.8 465.9 L647.0 396.7 L647.0 396.7 L650.9 395.8 L654.9 394.9 L658.9 394.1 L662.9 393.2 L667.0 392.5 L671.0 391.7 L668.5 371.9 L668.5 371.9 L664.5 372.7 L660.4 373.5 L656.4 374.3 L652.4 375.1 L648.4 376.0 L644.4 376.9 L640.5 377.9 L636.6 378.9 L632.7 379.9 L628.8 380.9 L624.9 381.9 L621.1 383.0 L617.3 384.2 L613.5 385.3 L609.8 386.5 L606.1 387.7 L602.4 388.9 L598.7 390.2 L595.1 391.5 L591.5 392.8 L588.0 394.1 L584.5 395.5 L581.0 396.8 L577.6 398.3 L574.2 399.7 L570.8 401.1 L567.5 402.6 L564.2 404.1 L561.0 405.7 L557.9 407.2 L554.7 408.8 L551.6 410.4 L548.6 412.0 L545.6 413.6 L542.7 415.3 L539.8 416.9 L542.3 436.7 L542.3 436.7 L545.2 435.0 L548.1 433.4 L551.1 431.7 L554.2 430.1 L557.2 428.5 L560.4 427.0 L569.2 496.1 L569.2 496.1 L566.0 497.7 L563.0 499.3 L559.9 500.9 L557.0 502.6 L554.0 504.2 L551.1 505.9 L548.3 507.6 L545.5 509.3 L542.8 511.0 L540.1 512.7 L537.5 514.5 L535.0 516.3 L532.5 518.0 L530.0 519.8 L527.6 521.7 L525.3 523.5 L523.1 525.3 L520.8 527.2 L518.7 529.1 L516.6 530.9 L514.6 532.8 L512.6 534.7 L510.7 536.6 L508.9 538.5 L507.2 540.5 L505.5 542.4 L503.8 544.3 L502.3 546.3 L500.8 548.3 L499.3 550.2 L498.0 552.2 L496.7 554.1 L495.4 556.1 L494.3 558.1 L493.2 560.1 L492.2 562.1 L483.3 492.9 L483.3 492.9 L484.4 490.9 L485.5 488.9 L486.6 486.9 L487.9 485.0 L489.1 483.0 L490.5 481.0 L488.0 461.3 L488.0 461.3 L486.6 463.3 L485.3 465.2 L484.1 467.2 L482.9 469.2 L481.8 471.2 L480.8 473.2 L479.8 475.2 L478.9 477.2 L478.1 479.2 L477.4 481.2 L476.7 483.2 L476.1 485.2 L475.6 487.2 L475.1 489.2 L474.8 491.2 L474.5 493.2 L474.2 495.2 L474.1 497.2 L474.0 499.1 L474.0 501.1 L474.0 503.0 L474.2 505.0 L474.4 506.9" fill="none" stroke="#101017" stroke-width="1.2" stroke-linejoin="round"/>
<path d="M937.0 424.3 L938.1 426.0 L939.2 427.8 L940.1 429.6 L941.0 431.4 L941.9 433.2 L942.6 435.1 L943.3 436.9 L944.0 438.8 L944.5 440.6 L945.0 442.5 L945.4 444.4 L945.7 446.3 L946.0 448.2 L946.2 450.1 L946.3 452.1 L946.3 454.0 L946.3 455.9 L946.2 457.9 L946.0 459.9 L945.8 461.8 L945.5 463.8 L945.1 465.7 L944.7 467.7 L944.1 469.7 L943.5 471.7 L942.9 473.7 L942.1 475.6 L941.3 477.6 L940.4 479.6 L939.5 481.6 L938.5 483.6 L937.4 485.5 L936.2 487.5 L935.0 489.5 L933.7 491.5 L932.3 493.4 L937.6 493.8 L939.0 491.8 L940.3 489.8 L941.5 487.8 L942.7 485.7 L943.9 483.7 L944.9 481.7 L945.9 479.7 L946.8 477.6 L947.6 475.6 L948.4 473.6 L949.0 471.5 L949.7 469.5 L950.2 467.5 L950.7 465.5 L951.1 463.5 L951.4 461.4 L951.6 459.4 L951.8 457.4 L951.9 455.4 L951.9 453.4 L951.9 451.5 L951.8 449.5 L951.6 447.5 L951.3 445.6 L950.9 443.6 L950.5 441.7 L950.0 439.8 L949.5 437.8 L948.8 435.9 L948.1 434.1 L947.4 432.2 L946.5 430.3 L945.6 428.5 L944.6 426.6 L943.5 424.8 L942.4 423.0 Z" fill="#b4bcc8" stroke="#101017" stroke-width="1"/>
<path d="M934.8 513.2 L932.3 493.4 L937.6 493.8 L940.1 513.6 Z" fill="#a6b0c0" stroke="#101017" stroke-width="1.05" stroke-linejoin="round"/>
<path d="M950.8 570.5 L942.0 501.3 L947.4 501.4 L956.2 570.6 Z" fill="#a6b0c0" stroke="#101017" stroke-width="1.05" stroke-linejoin="round"/>
<path d="M483.3 530.4 L482.2 528.7 L481.1 526.9 L480.2 525.1 L479.3 523.3 L478.4 521.5 L477.7 519.6 L477.0 517.8 L476.4 515.9 L475.8 514.1 L475.3 512.2 L474.9 510.3 L474.6 508.4 L474.3 506.5 L474.1 504.6 L474.0 502.6 L474.0 500.7 L474.0 498.8 L474.1 496.8 L474.3 494.8 L474.5 492.9 L474.8 490.9 L475.2 489.0 L475.7 487.0 L476.2 485.0 L476.8 483.0 L477.4 481.0 L478.2 479.1 L479.0 477.1 L479.9 475.1 L480.8 473.1 L481.9 471.1 L482.9 469.2 L484.1 467.2 L485.3 465.2 L486.6 463.2 L488.0 461.3 L482.7 460.9 L481.3 462.9 L480.0 464.9 L478.8 466.9 L477.6 469.0 L476.5 471.0 L475.4 473.0 L474.4 475.0 L473.5 477.1 L472.7 479.1 L471.9 481.1 L471.3 483.2 L470.6 485.2 L470.1 487.2 L469.6 489.2 L469.2 491.2 L468.9 493.3 L468.7 495.3 L468.5 497.3 L468.4 499.3 L468.4 501.2 L468.4 503.2 L468.6 505.2 L468.8 507.2 L469.0 509.1 L469.4 511.1 L469.8 513.0 L470.3 514.9 L470.8 516.9 L471.5 518.8 L472.2 520.6 L473.0 522.5 L473.8 524.4 L474.7 526.2 L475.7 528.1 L476.8 529.9 L477.9 531.7 Z" fill="#b4bcc8" stroke="#101017" stroke-width="1"/>
<path d="M485.8 550.2 L483.3 530.4 L477.9 531.7 L480.4 551.4 Z" fill="#a6b0c0" stroke="#101017" stroke-width="1.05" stroke-linejoin="round"/>
<path d="M489.0 608.6 L480.2 539.4 L474.7 540.4 L483.5 609.6 Z" fill="#a6b0c0" stroke="#101017" stroke-width="1.05" stroke-linejoin="round"/>
<path d="M957.2 536.7 L957.5 538.6 L957.6 540.5 L957.7 542.5 L957.6 544.4 L957.6 546.4 L957.4 548.3 L957.2 550.3 L956.9 552.3 L956.5 554.2 L956.1 556.2 L955.6 558.2 L955.0 560.1 L954.3 562.1 L953.6 564.1 L952.8 566.1 L952.0 568.1 L951.0 570.1 L950.0 572.0 L948.9 574.0 L947.8 576.0 L946.6 578.0 L945.3 579.9 L944.0 581.9 L942.5 583.9 L941.1 585.8 L939.5 587.8 L937.9 589.7 L936.2 591.6 L934.5 593.6 L932.6 595.5 L930.8 597.4 L928.8 599.3 L926.8 601.2 L924.7 603.1 L922.6 605.0 L920.4 606.8 L918.2 608.7 L915.9 610.5 L913.5 612.3 L911.1 614.1 L908.6 615.9 L906.0 617.7 L903.4 619.4 L900.8 621.2 L898.1 622.9 L895.3 624.6 L892.5 626.3 L889.6 628.0 L886.7 629.6 L883.7 631.3 L880.7 632.9 L877.6 634.5 L874.5 636.1 L871.4 637.6 L868.1 639.1 L864.9 640.7 L861.6 642.1 L858.3 643.6 L854.9 645.0 L851.5 646.5 L848.0 647.9 L844.5 649.2 L841.0 650.6 L837.4 651.9 L833.8 653.2 L830.1 654.4 L826.5 655.7 L822.7 656.9 L819.0 658.1 L815.2 659.2 L811.4 660.3 L807.6 661.4 L803.8 662.5 L799.9 663.5 L796.0 664.6 L792.1 665.5 L788.1 666.5 L784.2 667.4 L780.2 668.3 L776.2 669.1 L772.1 670.0 L768.1 670.8 L764.1 671.5 L760.0 672.3 L755.9 672.9 L751.8 673.6 L747.8 674.2 L743.7 674.8 L739.5 675.4 L735.4 675.9 L731.3 676.4 L727.2 676.9 L723.1 677.3 L719.0 677.7 L714.8 678.1 L710.7 678.4 L706.6 678.7 L702.5 679.0 L698.4 679.2 L694.3 679.4 L690.2 679.6 L686.1 679.7 L682.0 679.8 L678.0 679.8 L673.9 679.9 L669.9 679.9 L665.9 679.8 L661.9 679.7 L657.9 679.6 L654.0 679.4 L650.0 679.3 L646.1 679.0 L642.2 678.8 L638.3 678.5 L634.5 678.2 L630.7 677.8 L626.9 677.4 L623.1 677.0 L619.4 676.5 L615.7 676.0 L612.0 675.5 L608.4 675.0 L604.8 674.4 L601.2 673.7 L597.7 673.1 L594.2 672.4 L590.7 671.7 L587.3 670.9 L583.9 670.1 L580.6 669.3 L577.3 668.5 L574.1 667.6 L570.9 666.7 L567.7 665.7 L564.6 664.7 L561.6 663.7 L558.6 662.7 L555.6 661.6 L552.7 660.6 L549.8 659.4 L547.0 658.3 L544.3 657.1 L541.6 655.9 L538.9 654.7 L536.3 653.4 L533.8 652.1 L531.3 650.8 L528.9 649.5 L526.6 648.1 L524.3 646.7 L522.0 645.3 L519.9 643.9 L517.7 642.4 L515.7 640.9 L513.7 639.4 L511.8 637.9 L509.9 636.4 L508.1 634.8 L506.4 633.2 L504.7 631.6 L503.1 630.0 L501.6 628.3 L500.1 626.6 L498.7 625.0 L497.4 623.2 L496.1 621.5 L494.9 619.8 L493.8 618.0 L492.7 616.3 L491.7 614.5 L490.8 612.7 L489.9 610.8 L489.2 609.0 L488.5 607.2 L487.8 605.3 L487.3 603.4 L486.8 601.6 L486.3 599.7 L486.0 597.8 L485.7 595.9 L480.1 596.6 L480.4 598.5 L480.8 600.5 L481.2 602.4 L481.7 604.3 L482.3 606.2 L482.9 608.1 L483.7 610.0 L484.5 611.9 L485.3 613.8 L486.3 615.6 L487.3 617.4 L488.4 619.2 L489.5 621.0 L490.8 622.8 L492.1 624.6 L493.4 626.3 L494.9 628.1 L496.4 629.8 L497.9 631.5 L499.6 633.1 L501.3 634.8 L503.1 636.4 L504.9 638.0 L506.8 639.6 L508.8 641.2 L510.8 642.7 L512.9 644.2 L515.1 645.7 L517.3 647.2 L519.6 648.6 L522.0 650.1 L524.4 651.5 L526.8 652.8 L529.4 654.2 L532.0 655.5 L534.6 656.8 L537.3 658.0 L540.1 659.3 L542.9 660.5 L545.8 661.6 L548.7 662.8 L551.7 663.9 L554.7 665.0 L557.8 666.0 L560.9 667.1 L564.1 668.1 L567.3 669.0 L570.6 670.0 L573.9 670.9 L577.3 671.7 L580.7 672.6 L584.1 673.4 L587.6 674.2 L591.2 674.9 L594.8 675.6 L598.4 676.3 L602.0 676.9 L605.7 677.5 L609.4 678.1 L613.2 678.6 L617.0 679.1 L620.8 679.6 L624.6 680.1 L628.5 680.5 L632.4 680.8 L636.4 681.2 L640.3 681.4 L644.3 681.7 L648.3 681.9 L652.4 682.1 L656.4 682.3 L660.5 682.4 L664.6 682.5 L668.7 682.5 L672.8 682.6 L677.0 682.5 L681.1 682.5 L685.3 682.4 L689.5 682.3 L693.6 682.1 L697.8 681.9 L702.0 681.7 L706.2 681.4 L710.5 681.1 L714.7 680.7 L718.9 680.4 L723.1 680.0 L727.3 679.5 L731.6 679.0 L735.8 678.5 L740.0 678.0 L744.2 677.4 L748.4 676.8 L752.6 676.2 L756.7 675.5 L760.9 674.8 L765.1 674.0 L769.2 673.2 L773.3 672.4 L777.5 671.6 L781.6 670.7 L785.6 669.8 L789.7 668.8 L793.7 667.9 L797.7 666.9 L801.7 665.8 L805.7 664.8 L809.6 663.7 L813.6 662.6 L817.5 661.4 L821.3 660.2 L825.1 659.0 L828.9 657.8 L832.7 656.5 L836.4 655.2 L840.1 653.9 L843.8 652.6 L847.4 651.2 L851.0 649.8 L854.5 648.4 L858.0 646.9 L861.5 645.4 L864.9 643.9 L868.3 642.4 L871.6 640.9 L874.9 639.3 L878.1 637.7 L881.3 636.1 L884.5 634.5 L887.6 632.8 L890.6 631.1 L893.6 629.4 L896.5 627.7 L899.4 626.0 L902.2 624.2 L905.0 622.5 L907.7 620.7 L910.4 618.9 L913.0 617.1 L915.5 615.2 L918.0 613.4 L920.5 611.5 L922.8 609.7 L925.1 607.8 L927.4 605.9 L929.6 604.0 L931.7 602.0 L933.7 600.1 L935.7 598.1 L937.6 596.2 L939.5 594.2 L941.3 592.2 L943.0 590.3 L944.7 588.3 L946.3 586.3 L947.8 584.3 L949.2 582.3 L950.6 580.3 L951.9 578.2 L953.2 576.2 L954.3 574.2 L955.4 572.2 L956.5 570.1 L957.4 568.1 L958.3 566.1 L959.1 564.1 L959.9 562.0 L960.5 560.0 L961.1 558.0 L961.6 556.0 L962.1 553.9 L962.5 551.9 L962.8 549.9 L963.0 547.9 L963.2 545.9 L963.2 543.9 L963.2 541.9 L963.2 539.9 L963.0 538.0 L962.8 536.0 Z" fill="#b4bcc8" stroke="#101017" stroke-width="1"/>
<path d="M880.5 537.8 L877.6 539.4 L874.7 541.1 L871.7 542.7 L868.7 544.3 L865.6 545.9 L862.5 547.5 L859.3 549.0 L856.1 550.6 L852.8 552.1 L849.5 553.5 L846.1 555.0 L842.8 556.4 L839.3 557.9 L835.8 559.2 L832.3 560.6 L828.8 561.9 L825.2 563.2 L821.6 564.5 L817.9 565.8 L814.3 567.0 L810.5 568.2 L806.8 569.4 L803.0 570.5 L799.2 571.7 L795.4 572.8 L791.5 573.8 L787.6 574.8 L783.7 575.8 L779.8 576.8 L775.9 577.8 L771.9 578.7 L767.9 579.6 L763.9 580.4 L759.9 581.2 L755.8 582.0 L751.8 582.8 L752.8 585.3 L756.9 584.5 L761.1 583.7 L765.2 582.8 L769.3 582.0 L773.4 581.1 L777.4 580.1 L781.5 579.2 L785.5 578.2 L789.5 577.1 L793.5 576.1 L797.4 575.0 L801.3 573.9 L805.2 572.7 L809.1 571.6 L812.9 570.4 L816.7 569.1 L820.5 567.9 L824.2 566.6 L827.9 565.3 L831.6 563.9 L835.2 562.6 L838.8 561.2 L842.4 559.8 L845.9 558.3 L849.4 556.8 L852.8 555.4 L856.2 553.8 L859.5 552.3 L862.8 550.7 L866.1 549.1 L869.3 547.5 L872.4 545.9 L875.5 544.3 L878.6 542.6 L881.6 540.9 L884.5 539.2 Z" fill="#b4bcc8" stroke="#101017" stroke-width="1"/>
<path d="M754.3 602.5 L751.8 582.8 L752.8 585.3 L755.3 605.0 Z" fill="#a6b0c0" stroke="#101017" stroke-width="1.05" stroke-linejoin="round"/>
<path d="M787.2 666.7 L778.4 597.5 L779.9 599.9 L788.7 669.1 Z" fill="#a6b0c0" stroke="#101017" stroke-width="1.05" stroke-linejoin="round"/>
<path d="M653.6 590.8 L649.6 590.8 L645.7 590.6 L641.7 590.5 L637.8 590.3 L633.9 590.0 L630.0 589.8 L626.1 589.5 L622.3 589.2 L618.5 588.8 L614.7 588.4 L610.9 588.0 L607.2 587.5 L603.5 587.0 L599.8 586.5 L596.2 585.9 L592.6 585.3 L589.1 584.7 L585.5 584.0 L582.0 583.3 L578.6 582.6 L575.2 581.8 L571.8 581.0 L568.5 580.2 L565.2 579.3 L562.0 578.4 L558.8 577.5 L555.7 576.6 L552.6 575.6 L549.5 574.6 L546.5 573.5 L543.6 572.5 L540.7 571.4 L537.9 570.2 L535.1 569.1 L532.3 567.9 L529.6 566.7 L525.4 568.8 L528.1 570.0 L530.9 571.2 L533.8 572.4 L536.7 573.6 L539.7 574.7 L542.7 575.8 L545.7 576.9 L548.9 577.9 L552.0 578.9 L555.2 579.9 L558.5 580.8 L561.8 581.7 L565.2 582.6 L568.6 583.4 L572.0 584.3 L575.5 585.0 L579.0 585.8 L582.6 586.5 L586.2 587.2 L589.8 587.8 L593.5 588.5 L597.2 589.0 L601.0 589.6 L604.8 590.1 L608.6 590.6 L612.4 591.0 L616.3 591.4 L620.2 591.8 L624.1 592.1 L628.1 592.4 L632.1 592.7 L636.1 592.9 L640.1 593.1 L644.1 593.3 L648.2 593.4 L652.3 593.5 Z" fill="#b4bcc8" stroke="#101017" stroke-width="1"/>
<path d="M656.1 610.6 L653.6 590.8 L652.3 593.5 L654.8 613.3 Z" fill="#6a717c" stroke="#101017" stroke-width="1.05" stroke-linejoin="round"/>
<path d="M641.3 678.7 L632.5 609.5 L630.6 612.2 L639.4 681.4 Z" fill="#6a717c" stroke="#101017" stroke-width="1.05" stroke-linejoin="round"/>
<path d="M963.3 540.0 L963.5 541.9 L963.7 543.9 L963.7 545.9 L963.7 547.9 L963.7 549.9 L963.5 551.9 L963.3 553.9 L963.0 555.9 L962.6 557.9 L962.1 559.9 L961.6 561.9 L961.0 564.0 L960.4 566.0 L959.6 568.0 L958.8 570.0 L957.9 572.1 L957.0 574.1 L955.9 576.1 L954.8 578.2 L953.7 580.2 L952.4 582.2 L951.1 584.2 L949.7 586.2 L948.3 588.2 L946.8 590.2 L945.2 592.2 L943.5 594.2 L941.8 596.2 L940.0 598.2 L938.1 600.1 L936.2 602.1 L934.2 604.0 L932.2 606.0 L930.1 607.9 L927.9 609.8 L925.6 611.7 L923.3 613.6 L921.0 615.5 L918.5 617.3 L916.0 619.2 L913.5 621.0 L910.9 622.8 L908.2 624.6 L905.5 626.4 L902.7 628.2 L899.9 629.9 L897.0 631.7 L894.1 633.4 L891.1 635.1 L888.1 636.8 L885.0 638.4 L881.8 640.0 L878.6 641.7 L875.4 643.3 L872.1 644.8 L868.8 646.4 L865.4 647.9 L862.0 649.4 L858.5 650.9 L855.0 652.3 L851.5 653.7 L847.9 655.1 L844.3 656.5 L840.6 657.9 L836.9 659.2 L833.2 660.5 L829.4 661.7 L825.6 663.0 L821.8 664.2 L818.0 665.4 L814.1 666.5 L810.2 667.6 L806.2 668.7 L802.2 669.8 L798.2 670.8 L794.2 671.8 L790.2 672.8 L786.1 673.7 L782.1 674.6 L778.0 675.5 L773.8 676.4 L769.7 677.2 L765.6 678.0 L761.4 678.7 L757.3 679.4 L753.1 680.1 L748.9 680.8 L744.7 681.4 L740.5 681.9 L736.3 682.5 L732.1 683.0 L727.8 683.5 L723.6 683.9 L719.4 684.3 L715.2 684.7 L711.0 685.0 L706.8 685.3 L702.5 685.6 L698.3 685.8 L694.1 686.0 L690.0 686.2 L685.8 686.3 L681.6 686.4 L677.5 686.5 L673.3 686.5 L669.2 686.5 L665.1 686.4 L661.0 686.4 L656.9 686.2 L652.9 686.1 L648.8 685.9 L644.8 685.7 L640.8 685.4 L636.9 685.1 L632.9 684.8 L629.0 684.4 L625.1 684.0 L621.3 683.6 L617.5 683.1 L613.7 682.6 L609.9 682.1 L606.2 681.5 L602.5 680.9 L598.9 680.2 L595.3 679.6 L591.7 678.9 L588.1 678.1 L584.7 677.3 L581.2 676.5 L577.8 675.7 L574.4 674.8 L571.1 673.9 L567.8 673.0 L564.6 672.0 L561.4 671.0 L558.3 670.0 L555.2 668.9 L552.2 667.9 L549.2 666.7 L546.3 665.6 L543.4 664.4 L540.6 663.2 L537.8 662.0 L535.1 660.7 L532.5 659.4 L529.9 658.1 L527.4 656.8 L524.9 655.4 L522.5 654.0 L520.1 652.6 L517.8 651.1 L515.6 649.7 L513.4 648.2 L511.3 646.7 L509.3 645.1 L507.3 643.6 L505.4 642.0 L503.6 640.4 L501.8 638.7 L500.1 637.1 L498.4 635.4 L496.9 633.7 L495.4 632.0 L493.9 630.3 L492.6 628.5 L491.3 626.8 L490.0 625.0 L488.9 623.2 L487.8 621.4 L486.8 619.6 L485.8 617.7 L485.0 615.9 L484.2 614.0 L483.4 612.1 L482.8 610.2 L482.2 608.3 L481.7 606.4 L481.3 604.4 L480.9 602.5 L480.6 600.5 L468.8 507.6 L468.8 507.6 L469.1 509.7 L469.5 511.8 L470.0 513.8 L470.5 515.9 L471.2 517.9 L471.9 519.9 L472.7 521.9 L473.6 523.9 L474.5 525.9 L475.6 527.8 L476.7 529.8 L477.9 531.7 L480.4 551.4 L480.4 551.4 L479.3 549.6 L478.2 547.8 L477.2 546.0 L476.3 544.1 L475.5 542.3 L474.7 540.4 L483.5 609.6 L483.5 609.6 L484.3 611.5 L485.1 613.3 L486.0 615.2 L487.0 617.0 L488.1 618.8 L489.3 620.6 L490.5 622.4 L491.7 624.2 L493.1 625.9 L494.5 627.7 L496.0 629.4 L497.6 631.1 L499.2 632.7 L500.9 634.4 L502.6 636.0 L504.5 637.6 L506.4 639.2 L508.3 640.8 L510.3 642.4 L512.4 643.9 L514.6 645.4 L516.8 646.9 L519.1 648.3 L521.4 649.7 L523.8 651.1 L526.3 652.5 L528.8 653.8 L531.4 655.2 L534.0 656.5 L536.7 657.7 L539.4 659.0 L542.2 660.2 L545.1 661.4 L548.0 662.5 L551.0 663.6 L554.0 664.7 L545.2 595.6 L545.2 595.6 L542.2 594.5 L539.2 593.3 L536.3 592.2 L533.4 591.0 L530.6 589.8 L527.9 588.6 L525.4 568.8 L525.4 568.8 L528.1 570.0 L530.9 571.2 L533.8 572.4 L536.7 573.6 L539.7 574.7 L542.7 575.8 L545.7 576.9 L548.9 577.9 L552.0 578.9 L555.2 579.9 L558.5 580.8 L561.8 581.7 L565.2 582.6 L568.6 583.4 L572.0 584.3 L575.5 585.0 L579.0 585.8 L582.6 586.5 L586.2 587.2 L589.8 587.8 L593.5 588.5 L597.2 589.0 L601.0 589.6 L604.8 590.1 L608.6 590.6 L612.4 591.0 L616.3 591.4 L620.2 591.8 L624.1 592.1 L628.1 592.4 L632.1 592.7 L636.1 592.9 L640.1 593.1 L644.1 593.3 L648.2 593.4 L652.3 593.5 L654.8 613.3 L654.8 613.3 L650.7 613.2 L646.7 613.1 L642.6 612.9 L638.6 612.7 L634.6 612.5 L630.6 612.2 L639.4 681.4 L639.4 681.4 L643.4 681.6 L647.4 681.9 L651.4 682.1 L655.5 682.2 L659.5 682.4 L663.6 682.5 L667.7 682.5 L671.8 682.6 L676.0 682.5 L680.1 682.5 L684.3 682.4 L688.5 682.3 L692.7 682.1 L696.8 681.9 L701.0 681.7 L705.3 681.5 L709.5 681.2 L713.7 680.8 L717.9 680.5 L722.1 680.1 L726.3 679.6 L730.6 679.2 L734.8 678.7 L739.0 678.1 L743.2 677.6 L747.4 676.9 L751.6 676.3 L755.8 675.6 L759.9 674.9 L764.1 674.2 L768.2 673.4 L772.4 672.6 L776.5 671.8 L780.6 670.9 L784.7 670.0 L788.7 669.1 L779.9 599.9 L779.9 599.9 L775.9 600.8 L771.8 601.7 L767.7 602.6 L763.6 603.4 L759.4 604.2 L755.3 605.0 L752.8 585.3 L752.8 585.3 L756.9 584.5 L761.1 583.7 L765.2 582.8 L769.3 582.0 L773.4 581.1 L777.4 580.1 L781.5 579.2 L785.5 578.2 L789.5 577.1 L793.5 576.1 L797.4 575.0 L801.3 573.9 L805.2 572.7 L809.1 571.6 L812.9 570.4 L816.7 569.1 L820.5 567.9 L824.2 566.6 L827.9 565.3 L831.6 563.9 L835.2 562.6 L838.8 561.2 L842.4 559.8 L845.9 558.3 L849.4 556.8 L852.8 555.4 L856.2 553.8 L859.5 552.3 L862.8 550.7 L866.1 549.1 L869.3 547.5 L872.4 545.9 L875.5 544.3 L878.6 542.6 L881.6 540.9 L884.5 539.2 L887.0 559.0 L887.0 559.0 L884.1 560.7 L881.1 562.4 L878.0 564.0 L874.9 565.7 L871.8 567.3 L868.6 568.9 L877.4 638.1 L877.4 638.1 L880.6 636.5 L883.7 634.8 L886.8 633.2 L889.9 631.5 L892.9 629.8 L895.8 628.1 L898.7 626.4 L901.6 624.7 L904.4 622.9 L907.1 621.1 L909.8 619.3 L912.4 617.5 L915.0 615.7 L917.5 613.8 L919.9 612.0 L922.3 610.1 L924.6 608.2 L926.9 606.3 L929.0 604.4 L931.2 602.5 L933.2 600.5 L935.2 598.6 L937.2 596.6 L939.1 594.7 L940.9 592.7 L942.6 590.7 L944.3 588.7 L945.9 586.7 L947.4 584.7 L948.9 582.7 L950.3 580.7 L951.6 578.7 L952.9 576.7 L954.1 574.7 L955.2 572.6 L956.2 570.6 L947.4 501.4 L947.4 501.4 L946.4 503.5 L945.3 505.5 L944.1 507.5 L942.8 509.5 L941.5 511.6 L940.1 513.6 L937.6 493.8 L937.6 493.8 L939.0 491.8 L940.3 489.7 L941.6 487.7 L942.8 485.7 L943.9 483.6 L945.0 481.6 L945.9 479.5 L946.8 477.5 L947.7 475.4 L948.4 473.4 L949.1 471.3 L949.7 469.3 L950.3 467.2 L950.7 465.2 L951.1 463.1 L951.4 461.1 L951.7 459.1 L951.8 457.1 L951.9 455.1 L951.9 453.0 L951.9 451.0 L951.7 449.0 L951.5 447.1 Z" fill="url(#gOuter)" stroke="none"/>
<path d="M963.3 540.0 L963.5 541.9 L963.7 543.9 L963.7 545.9 L963.7 547.9 L963.7 549.9 L963.5 551.9 L963.3 553.9 L963.0 555.9 L962.6 557.9 L962.1 559.9 L961.6 561.9 L961.0 564.0 L960.4 566.0 L959.6 568.0 L958.8 570.0 L957.9 572.1 L957.0 574.1 L955.9 576.1 L954.8 578.2 L953.7 580.2 L952.4 582.2 L951.1 584.2 L949.7 586.2 L948.3 588.2 L946.8 590.2 L945.2 592.2 L943.5 594.2 L941.8 596.2 L940.0 598.2 L938.1 600.1 L936.2 602.1 L934.2 604.0 L932.2 606.0 L930.1 607.9 L927.9 609.8 L925.6 611.7 L923.3 613.6 L921.0 615.5 L918.5 617.3 L916.0 619.2 L913.5 621.0 L910.9 622.8 L908.2 624.6 L905.5 626.4 L902.7 628.2 L899.9 629.9 L897.0 631.7 L894.1 633.4 L891.1 635.1 L888.1 636.8 L885.0 638.4 L881.8 640.0 L878.6 641.7 L875.4 643.3 L872.1 644.8 L868.8 646.4 L865.4 647.9 L862.0 649.4 L858.5 650.9 L855.0 652.3 L851.5 653.7 L847.9 655.1 L844.3 656.5 L840.6 657.9 L836.9 659.2 L833.2 660.5 L829.4 661.7 L825.6 663.0 L821.8 664.2 L818.0 665.4 L814.1 666.5 L810.2 667.6 L806.2 668.7 L802.2 669.8 L798.2 670.8 L794.2 671.8 L790.2 672.8 L786.1 673.7 L782.1 674.6 L778.0 675.5 L773.8 676.4 L769.7 677.2 L765.6 678.0 L761.4 678.7 L757.3 679.4 L753.1 680.1 L748.9 680.8 L744.7 681.4 L740.5 681.9 L736.3 682.5 L732.1 683.0 L727.8 683.5 L723.6 683.9 L719.4 684.3 L715.2 684.7 L711.0 685.0 L706.8 685.3 L702.5 685.6 L698.3 685.8 L694.1 686.0 L690.0 686.2 L685.8 686.3 L681.6 686.4 L677.5 686.5 L673.3 686.5 L669.2 686.5 L665.1 686.4 L661.0 686.4 L656.9 686.2 L652.9 686.1 L648.8 685.9 L644.8 685.7 L640.8 685.4 L636.9 685.1 L632.9 684.8 L629.0 684.4 L625.1 684.0 L621.3 683.6 L617.5 683.1 L613.7 682.6 L609.9 682.1 L606.2 681.5 L602.5 680.9 L598.9 680.2 L595.3 679.6 L591.7 678.9 L588.1 678.1 L584.7 677.3 L581.2 676.5 L577.8 675.7 L574.4 674.8 L571.1 673.9 L567.8 673.0 L564.6 672.0 L561.4 671.0 L558.3 670.0 L555.2 668.9 L552.2 667.9 L549.2 666.7 L546.3 665.6 L543.4 664.4 L540.6 663.2 L537.8 662.0 L535.1 660.7 L532.5 659.4 L529.9 658.1 L527.4 656.8 L524.9 655.4 L522.5 654.0 L520.1 652.6 L517.8 651.1 L515.6 649.7 L513.4 648.2 L511.3 646.7 L509.3 645.1 L507.3 643.6 L505.4 642.0 L503.6 640.4 L501.8 638.7 L500.1 637.1 L498.4 635.4 L496.9 633.7 L495.4 632.0 L493.9 630.3 L492.6 628.5 L491.3 626.8 L490.0 625.0 L488.9 623.2 L487.8 621.4 L486.8 619.6 L485.8 617.7 L485.0 615.9 L484.2 614.0 L483.4 612.1 L482.8 610.2 L482.2 608.3 L481.7 606.4 L481.3 604.4 L480.9 602.5 L480.6 600.5 M468.8 507.6 L468.8 507.6 L469.1 509.7 L469.5 511.8 L470.0 513.8 L470.5 515.9 L471.2 517.9 L471.9 519.9 L472.7 521.9 L473.6 523.9 L474.5 525.9 L475.6 527.8 L476.7 529.8 L477.9 531.7 L480.4 551.4 L480.4 551.4 L479.3 549.6 L478.2 547.8 L477.2 546.0 L476.3 544.1 L475.5 542.3 L474.7 540.4 L483.5 609.6 L483.5 609.6 L484.3 611.5 L485.1 613.3 L486.0 615.2 L487.0 617.0 L488.1 618.8 L489.3 620.6 L490.5 622.4 L491.7 624.2 L493.1 625.9 L494.5 627.7 L496.0 629.4 L497.6 631.1 L499.2 632.7 L500.9 634.4 L502.6 636.0 L504.5 637.6 L506.4 639.2 L508.3 640.8 L510.3 642.4 L512.4 643.9 L514.6 645.4 L516.8 646.9 L519.1 648.3 L521.4 649.7 L523.8 651.1 L526.3 652.5 L528.8 653.8 L531.4 655.2 L534.0 656.5 L536.7 657.7 L539.4 659.0 L542.2 660.2 L545.1 661.4 L548.0 662.5 L551.0 663.6 L554.0 664.7 L545.2 595.6 L545.2 595.6 L542.2 594.5 L539.2 593.3 L536.3 592.2 L533.4 591.0 L530.6 589.8 L527.9 588.6 L525.4 568.8 L525.4 568.8 L528.1 570.0 L530.9 571.2 L533.8 572.4 L536.7 573.6 L539.7 574.7 L542.7 575.8 L545.7 576.9 L548.9 577.9 L552.0 578.9 L555.2 579.9 L558.5 580.8 L561.8 581.7 L565.2 582.6 L568.6 583.4 L572.0 584.3 L575.5 585.0 L579.0 585.8 L582.6 586.5 L586.2 587.2 L589.8 587.8 L593.5 588.5 L597.2 589.0 L601.0 589.6 L604.8 590.1 L608.6 590.6 L612.4 591.0 L616.3 591.4 L620.2 591.8 L624.1 592.1 L628.1 592.4 L632.1 592.7 L636.1 592.9 L640.1 593.1 L644.1 593.3 L648.2 593.4 L652.3 593.5 L654.8 613.3 L654.8 613.3 L650.7 613.2 L646.7 613.1 L642.6 612.9 L638.6 612.7 L634.6 612.5 L630.6 612.2 L639.4 681.4 L639.4 681.4 L643.4 681.6 L647.4 681.9 L651.4 682.1 L655.5 682.2 L659.5 682.4 L663.6 682.5 L667.7 682.5 L671.8 682.6 L676.0 682.5 L680.1 682.5 L684.3 682.4 L688.5 682.3 L692.7 682.1 L696.8 681.9 L701.0 681.7 L705.3 681.5 L709.5 681.2 L713.7 680.8 L717.9 680.5 L722.1 680.1 L726.3 679.6 L730.6 679.2 L734.8 678.7 L739.0 678.1 L743.2 677.6 L747.4 676.9 L751.6 676.3 L755.8 675.6 L759.9 674.9 L764.1 674.2 L768.2 673.4 L772.4 672.6 L776.5 671.8 L780.6 670.9 L784.7 670.0 L788.7 669.1 L779.9 599.9 L779.9 599.9 L775.9 600.8 L771.8 601.7 L767.7 602.6 L763.6 603.4 L759.4 604.2 L755.3 605.0 L752.8 585.3 L752.8 585.3 L756.9 584.5 L761.1 583.7 L765.2 582.8 L769.3 582.0 L773.4 581.1 L777.4 580.1 L781.5 579.2 L785.5 578.2 L789.5 577.1 L793.5 576.1 L797.4 575.0 L801.3 573.9 L805.2 572.7 L809.1 571.6 L812.9 570.4 L816.7 569.1 L820.5 567.9 L824.2 566.6 L827.9 565.3 L831.6 563.9 L835.2 562.6 L838.8 561.2 L842.4 559.8 L845.9 558.3 L849.4 556.8 L852.8 555.4 L856.2 553.8 L859.5 552.3 L862.8 550.7 L866.1 549.1 L869.3 547.5 L872.4 545.9 L875.5 544.3 L878.6 542.6 L881.6 540.9 L884.5 539.2 L887.0 559.0 L887.0 559.0 L884.1 560.7 L881.1 562.4 L878.0 564.0 L874.9 565.7 L871.8 567.3 L868.6 568.9 L877.4 638.1 L877.4 638.1 L880.6 636.5 L883.7 634.8 L886.8 633.2 L889.9 631.5 L892.9 629.8 L895.8 628.1 L898.7 626.4 L901.6 624.7 L904.4 622.9 L907.1 621.1 L909.8 619.3 L912.4 617.5 L915.0 615.7 L917.5 613.8 L919.9 612.0 L922.3 610.1 L924.6 608.2 L926.9 606.3 L929.0 604.4 L931.2 602.5 L933.2 600.5 L935.2 598.6 L937.2 596.6 L939.1 594.7 L940.9 592.7 L942.6 590.7 L944.3 588.7 L945.9 586.7 L947.4 584.7 L948.9 582.7 L950.3 580.7 L951.6 578.7 L952.9 576.7 L954.1 574.7 L955.2 572.6 L956.2 570.6 L947.4 501.4 L947.4 501.4 L946.4 503.5 L945.3 505.5 L944.1 507.5 L942.8 509.5 L941.5 511.6 L940.1 513.6 L937.6 493.8 L937.6 493.8 L939.0 491.8 L940.3 489.7 L941.6 487.7 L942.8 485.7 L943.9 483.6 L945.0 481.6 L945.9 479.5 L946.8 477.5 L947.7 475.4 L948.4 473.4 L949.1 471.3 L949.7 469.3 L950.3 467.2 L950.7 465.2 L951.1 463.1 L951.4 461.1 L951.7 459.1 L951.8 457.1 L951.9 455.1 L951.9 453.0 L951.9 451.0 L951.7 449.0 L951.5 447.1" fill="none" stroke="#101017" stroke-width="1.2" stroke-linejoin="round"/>
</g>
<circle cx="13.9" cy="32.8" r="6.8" fill="url(#gGreen)" stroke="#98bb78" stroke-width="0.8"/>
<g stroke="#4a9ec4" stroke-width="0.8" stroke-linejoin="round"><path d="M39.2 27.7 h6.2 v6.2 h-6.2 z" fill="#dcf3fc"/><path d="M39.2 27.7 l2.4 -2.4 h6.2 l-2.4 2.4 z" fill="#bfe6f6"/><path d="M45.4 27.7 l2.4 -2.4 v6.2 l-2.4 2.4 z" fill="#5faed2"/></g>
<g stroke="#4a9ec4" stroke-width="0.8" stroke-linejoin="round"><path d="M39.2 38.7 h6.2 v6.2 h-6.2 z" fill="#dcf3fc"/><path d="M39.2 38.7 l2.4 -2.4 h6.2 l-2.4 2.4 z" fill="#bfe6f6"/><path d="M45.4 38.7 l2.4 -2.4 v6.2 l-2.4 2.4 z" fill="#5faed2"/></g>
<g stroke="#4a9ec4" stroke-width="0.8" stroke-linejoin="round"><path d="M39.2 49.7 h6.2 v6.2 h-6.2 z" fill="#dcf3fc"/><path d="M39.2 49.7 l2.4 -2.4 h6.2 l-2.4 2.4 z" fill="#bfe6f6"/><path d="M45.4 49.7 l2.4 -2.4 v6.2 l-2.4 2.4 z" fill="#5faed2"/></g>
<g fill="#1d536f" stroke="none"><path d="M52.6 32 L57.6 26.8 L62.6 32 H59.6 C59.8 34.5 61 36 63.2 36.6 C60 37.6 55.8 36 55.6 32 Z"/><path d="M68.8 31.6 L63.8 36.8 L58.8 31.6 H61.8 C61.6 29 60.4 27.6 58.2 27 C61.4 26 65.6 27.6 65.8 31.6 Z" transform="translate(0.6 -0.6)"/></g>
<path d="M50.3 45.6 H68.7 M50.3 49.8 H68.7 M50.3 54 H67" stroke="#8d8d8d" stroke-width="1.8"/>
<path d="M86.5 25.8 h6.0 l2.5 2.5 v7.7 h-8.5 z" fill="#f1f1f1" stroke="#cdcdcd" stroke-width="0.9"/><path d="M88.3 30.1 h4.9" stroke="#cdcdcd" stroke-width="0.9"/><path d="M88.3 32.3 h4.9" stroke="#cdcdcd" stroke-width="0.9"/><path d="M88.3 34.5 h4.9" stroke="#cdcdcd" stroke-width="0.9"/>
<path d="M93.3 30.6 h6.3 l2.5 2.5 v7.7 h-8.8 z" fill="#f6f6f6" stroke="#bfbfbf" stroke-width="0.9"/><path d="M95.1 34.9 h5.2" stroke="#bfbfbf" stroke-width="0.9"/><path d="M95.1 37.1 h5.2" stroke="#bfbfbf" stroke-width="0.9"/><path d="M95.1 39.3 h5.2" stroke="#bfbfbf" stroke-width="0.9"/>
<path d="M86.5 57.2 h10.4 v11.6 h-10.4 z" fill="#ececec" stroke="#cbcbcb" stroke-width="0.9"/><path d="M89.5 57.2 v-1.6 h1.4 l0.8 -1.3 l0.8 1.3 h1.4 v1.6 z" fill="#dedede" stroke="#c6c6c6" stroke-width="0.7"/>
<path d="M94.4 60.0 h5.3 l2.5 2.5 v7.1 h-7.8 z" fill="#f6f6f6" stroke="#bfbfbf" stroke-width="0.9"/><path d="M96.2 64.0 h4.2" stroke="#bfbfbf" stroke-width="0.9"/><path d="M96.2 66.2 h4.2" stroke="#bfbfbf" stroke-width="0.9"/>
<path d="M87.6 82.6 L99.6 95.2 M99.8 82.4 L87.4 95.4" stroke="#b3b3b3" stroke-width="2.1" stroke-linecap="round"/>
<circle cx="170.7" cy="28.9" r="4.1" fill="#a3acca" stroke="#8f98b8" stroke-width="0.5"/><circle cx="169.6" cy="27.6" r="1.6" fill="#dfe3f0"/>
<path d="M159.2 31 h6.8 v6.2 h-6.8 z" fill="#9fd8f2" stroke="#6bb6d8" stroke-width="0.7"/>
<path d="M169.2 31.2 L173.6 38 C173.6 40 164.6 40 164.6 38 Z" fill="#dcc68f" stroke="#b9a166" stroke-width="0.6"/>
<path d="M159.9 56 v8" stroke="#47595f" stroke-width="1.5"/><path d="M161.8 53.8 h8.2 v7.6 h-8.2 z" fill="#eef3f5" stroke="#b9c4c9" stroke-width="0.7"/><path d="M163.2 55.8 l3 3 m0 -2.4 v2.4 h-2.4" stroke="#333" stroke-width="0.9" fill="none"/><path d="M168 61.4 v7" stroke="#0f4a5a" stroke-width="1.8"/><path d="M169 58.8 h5.6 v9.6 h-5.6 z" fill="#a9dff0" stroke="#8dcbe2" stroke-width="0.6"/>
<path d="M274.9 31.1 H295.6 L286.8 49.8 H267.6 Z" fill="#fffbf2" stroke="#a08a55" stroke-width="2.1" stroke-linejoin="miter"/>
<rect x="307" y="27.2" width="13" height="12.6" fill="none" stroke="#444" stroke-width="1" stroke-dasharray="1 1.9"/>
<path d="M307.4 33.4 C309 29.6 311.8 29.4 313.6 33.2 C315.4 37 318.2 37 320 33.6" fill="none" stroke="#37a0cb" stroke-width="1.9" stroke-linecap="round"/>
<path d="M316.4 54.3 L310.5 69.6" stroke="#444" stroke-width="1.3" stroke-dasharray="4 2"/>
<g stroke-linecap="round"><path d="M307.3 88.4 h12" stroke="#555" stroke-width="0.9"/><path d="M310.8 81.4 l6 15 M316.9 81.4 l-6.5 14.5" stroke="#a08a55" stroke-width="1.1"/></g><g font-family="Liberation Sans,sans-serif" font-size="7" font-weight="bold" fill="#333"><text x="305.5" y="85.8">y</text><text x="305.7" y="97.0">z</text><text x="319.3" y="91.0">x</text></g>
<g stroke-linejoin="round"><path d="M397.7 43 L408.7 43.4 V47.4 L396.4 55.3 H388 V51 Z" fill="#cfcfcf" stroke="#a2a2a2" stroke-width="0.7"/><path d="M408.7 43.4 V47.4 L396.4 55.3 V51.2 Z" fill="#8f8f8f"/><path d="M388 51.2 H396.4 V55.3 H388 Z" fill="#e3e3e3" stroke="#a2a2a2" stroke-width="0.6"/><path d="M378.4 40.2 L385.4 36.4 V30.6 L388.9 28.8 V32 L397.7 27.2 V43 L388 51.2 V55.3 H384 C380.5 55.3 378.4 53 378.4 49.6 Z" fill="#bfe6ae" stroke="#6fa35f" stroke-width="0.9"/><path d="M383 41.5 L397.7 35 V41 L383 47.6 Z" fill="#a9e0ea"/><path d="M383 43.6 L397.7 37" stroke="#0b5c7a" stroke-width="1.3"/><path d="M378.4 45.5 H383 V55 M383 45.5 V39" stroke="#6fa35f" stroke-width="0.8" fill="none"/><path d="M378.8 46 H383 V55 H384 C380.6 55 378.8 53 378.8 49.6 Z" fill="#9cc68c"/></g>
<g stroke-linejoin="round"><path d="M437.6 43 L447.8 43.2 V46.6 C442 46.6 438.5 50 436.4 55.3 H428 V51 Z" fill="#cfcfcf" stroke="#a2a2a2" stroke-width="0.7"/><path d="M428 51.2 H436.4 V55.3 H428 Z" fill="#e3e3e3" stroke="#a2a2a2" stroke-width="0.6"/><path d="M418.4 33 C421 29 429 26.2 437.6 26.4 V43 L428 51.2 V55.3 H424 C420.5 55.3 418.4 53 418.4 49.6 Z" fill="#bfe6ae" stroke="#6fa35f" stroke-width="0.9" stroke-dasharray="1.2 1.2"/><path d="M418.6 33.2 L422.8 30.4 V46 H418.6 Z" fill="#93d9e6"/><path d="M422.8 30.6 V46" stroke="#0b6a98" stroke-width="1.5"/><path d="M418.8 46 H423 V55 H424 C420.6 55 418.8 53 418.8 49.6 Z" fill="#9cc68c" stroke="#6fa35f" stroke-width="0.7"/><path d="M418.4 33 V49.6 C418.4 53 420.5 55.3 424 55.3 H428" fill="none" stroke="#6fa35f" stroke-width="0.9"/><path d="M424 41 L432.5 36 H437.6" fill="none" stroke="#555" stroke-width="0.8" stroke-dasharray="1 1.4"/></g>
<g transform="translate(457.0 25.6) scale(1.00)" stroke-linejoin="round"><path d="M0.5 6.5 L6.5 0.5 H15.5 V8.5 L9.5 14.5 H0.5 Z" fill="#a9dcf2" stroke="#9cc3d6" stroke-width="0.8"/><path d="M6.5 0.5 H15.5 V8.5 L9.5 14.5 V6.5 Z" fill="#4fa7d0"/><path d="M6.5 0.5 H15.5 L9.5 6.5 H0.5 Z" fill="#8fd0ec"/><path d="M0.5 6.5 H9.5 V14.5 H0.5 Z" fill="#fdfdfd" stroke="#b5c6cf" stroke-width="0.8"/></g>
<path d="M461.6 55.4 H472.6 L468.6 66.6 H460.2 L461.6 62.8 H464.4 L465.4 60 H458.2 Z" fill="#b5e4aa" stroke="#5e9c52" stroke-width="0.8" stroke-linejoin="round"/><path d="M460.2 66.6 H468.6 L472.6 55.4 V57 L469 68.3 H460.6 Z" fill="#8cc47e" stroke="#5e9c52" stroke-width="0.5"/>
<g fill="#d3effa" stroke="#9bb6c2" stroke-width="0.8" stroke-linejoin="round"><path d="M457.2 93 C458 87 461 83.6 466 82.4 C468.6 83 470.6 84 472.6 85.8 C468.6 88 466.6 91.4 466.4 96.6 C464 94.4 460.8 93.2 457.2 93 Z"/><path d="M461.2 85.4 C464 86 467.4 87.6 469 89.4 M462.6 92.6 C462.8 88.6 465.4 84.6 469.6 83.8" fill="none"/></g>
<rect x="541.4" y="27.8" width="29" height="27.8" fill="#e9e9e9"/>
<path d="M541.4 27.8 V55.6 H570" fill="none" stroke="#9a9a9a" stroke-width="0.9" stroke-dasharray="1 1.6"/>
<path d="M541.2 28 H554.6 M559.6 28 H570.6 V55.8" fill="none" stroke="#8cc07a" stroke-width="1.8"/>
<path d="M554.6 27.4 L557 29.8 L559.6 27.4" fill="#fafafa" stroke="none"/>
<path d="M556 29.6 L558.6 32 L556 34.4 L558.6 36.8 L556 39.2 L558.6 41.6 L556 44 L558.6 46.4" fill="none" stroke="#9fdcef" stroke-width="2"/>
<path d="M558 29.6 V47.4" stroke="#12313d" stroke-width="1.7" stroke-dasharray="1.7 1.9"/>
<g transform="translate(579.8 24.8) scale(1.00)"><path d="M9.2 0 H23.3 V9 C23.3 14 20 19.5 18.5 19.5 H14 C12.5 19.5 9.2 14 9.2 9 Z" fill="url(#gPunch)" stroke="#bdbdbd" stroke-width="0.5"/><path d="M0 12.4 H3 L12.5 21.5 H20 L29.5 12.4 H32 V16.5 H30.5 L21 26 H11.5 L2 16.5 H0 Z" fill="#b9dcaa" stroke="#7fae6c" stroke-width="0.8" stroke-linejoin="round"/><path d="M0 14.6 H2.5 L12 23.8 H20.5 L30 14.6 H32" fill="none" stroke="#8fbd7d" stroke-width="0.7"/></g>
<path d="M620.4 39.6 V31.6 L624.6 26.8 H631 C633 26.8 633.8 28.4 633.6 30.4 L632.4 39.6 Z" fill="#c2eab4" stroke="#84bb74" stroke-width="0.9" stroke-linejoin="round"/>
<path d="M627.6 39.4 V31.6 C625.4 30.4 625.6 27.8 628 27.8 C630.4 27.8 630.6 30.4 628.6 31.6 V39.4" fill="#eaf7e4" stroke="#14586c" stroke-width="1.2"/>
<path d="M620.2 54.4 H627 V66.6 H620.2 Z" fill="#8fcdea" stroke="#6db5d6" stroke-width="0.6"/>
<path d="M627 54.4 L629.4 56.6 V61 H635.2 L633.8 63.4 H627.8 L625.2 66.4 Z" fill="#a8dcb8" stroke="#1f6a6e" stroke-width="0.9" stroke-linejoin="round"/>
<path d="M628.6 63.6 V69 M632.6 63.6 V69 M625.4 66.6 L624.6 69" stroke="#2a6a4a" stroke-width="0.9" stroke-dasharray="1.3 1"/>
<path d="M727.6 28.6 H733.8 V46 H727.6 Z" fill="#ebebeb" stroke="#555" stroke-width="0.8" stroke-dasharray="1 1.2"/>
<path d="M727 28.4 H734.2" stroke="#4d7b3d" stroke-width="1.2"/>
<path d="M715.4 46.6 H746.4 V52.4 H715.4 Z" fill="#e4e6e2" stroke="#4d7b3d" stroke-width="1.6"/>
<path d="M716.2 47.4 H733.8 C732.6 50 730.6 51.6 727.4 51.6 H716.2 Z" fill="#cdd5c9"/>
<path d="M727.6 46.6 C731.6 46.6 733.4 46.6 733.8 46.2 M733.8 46.4 C733.6 49.8 731 52.2 727 52.2" fill="none" stroke="#4d7b3d" stroke-width="1.1"/>
<path d="M736.2 30.8 C740 31.4 742.6 33.6 743.6 36.6" fill="none" stroke="#444" stroke-width="1.8"/><path d="M745.9 31.6 L745.7 39.6 L739.2 36.2 Z" fill="#444"/>
<path d="M756 35.2 H760.8 L763.5 38.6 L766.2 35.2 H771 V40.8 H756 Z" fill="#d2d2d2" stroke="#b4b4b4" stroke-width="0.6"/>
<path d="M755.6 28.2 L763.5 35.6 L771.2 28.2 M755.6 31.6 L763.5 38 L771.2 31.6 M760.6 25.6 L763.5 33.6 L766.4 25.6" fill="none" stroke="#6ca04e" stroke-width="1" stroke-linejoin="round"/>
<path d="M755.4 67.2 V63 H760.4 V56.4 H764.6 V64.6 C764.6 66.2 763.6 67.2 762 67.2 Z" fill="#cbd6c4" stroke="#3d6b2d" stroke-width="1.1" stroke-linejoin="round"/>
<path d="M766.4 67.2 H770.4 V60" fill="none" stroke="#555" stroke-width="0.9" stroke-dasharray="1.1 1.3"/><path d="M770.2 60 C770 58 768.8 57 767.4 56.6" fill="none" stroke="#444" stroke-width="0.9"/><path d="M766.2 55.4 L769 56 L767 58.2 Z" fill="#333"/>
<path d="M760.2 81.6 H766.6 V86 H770.8 V92.4 H766.6 V96.6 H760.2 V92.4 H755.8 V86 H760.2 Z" fill="#bdebc6" stroke="#3f8f45" stroke-width="0.9" stroke-linejoin="round"/>
<circle cx="763.4" cy="89.2" r="2.6" fill="#e3e3e3"/>
<path d="M756.4 82.2 L761.4 87 M765.4 91.2 L770.4 96" stroke="#17788a" stroke-width="0.9"/>
<path d="M760.2 86 V92.4 H766.6 V86 Z" fill="none" stroke="#3f8f45" stroke-width="0.7" stroke-dasharray="0.9 1.2"/>
<path d="M855.2 33.4 H867 L864.6 40.6 H852.8 Z" fill="#c3cbc3" stroke="#a9b2a9" stroke-width="0.6"/>
<path d="M855.6 25.6 H866 L863 34.4 H852.6 Z" fill="#a9dd98" stroke="#6fa85e" stroke-width="0.8" stroke-linejoin="round"/><path d="M852.6 34.4 H863 L866 25.6 V27.2 L863.4 35.8 H853 Z" fill="#88c078"/>
<rect x="852.6" y="54.4" width="15" height="12.8" fill="#f0f0f0" stroke="#cfcfcf" stroke-width="0.8"/><rect x="852.6" y="54.4" width="5" height="12.8" fill="#e2e2e2"/><path d="M859.6 60.8 H864.4 M862.6 58.8 L864.6 60.8 L862.6 62.8" fill="none" stroke="#a9a9a9" stroke-width="1.1"/>
<rect x="852.8" y="81.2" width="14.6" height="15.4" fill="#d9f0d6" stroke="#7d8f7a" stroke-width="0.9" stroke-dasharray="1 1.3"/>
<path d="M852.8 81.4 H867.4 V96.4 M855.6 81.6 L867.2 92.4" fill="none" stroke="#79b868" stroke-width="1.2"/>
<path d="M858 84.6 V96 M862.4 88.4 V96" stroke="#4e8a48" stroke-width="0.8" stroke-dasharray="0.9 1.3"/>
<rect x="940.6" y="27.4" width="27" height="27" fill="url(#hatch)" stroke="#62b3d2" stroke-width="0.9"/><path d="M940.4 54.4 H967.8" stroke="#3e93b4" stroke-width="1.1"/>
<rect x="1001.6" y="28.6" width="28" height="25.8" fill="#fdfdfd" stroke="#8f8f8f" stroke-width="0.9"/>
<path d="M1001.4 29 H1029.8" stroke="#666" stroke-width="1.8"/>
<path d="M1001.6 34.2 H1029.6 M1001.6 39.2 H1029.6 M1001.6 44.2 H1029.6 M1001.6 49.2 H1029.6 M1008.6 29 V54.4 M1015.6 29 V54.4 M1022.6 29 V54.4" stroke="#c3c3c3" stroke-width="0.8"/>
<g fill="#fdfdfd" stroke="#444" stroke-width="1.1"><rect x="10.6" y="137.6" width="3.6" height="3.6"/><rect x="10.6" y="145.2" width="3.6" height="3.6"/><rect x="10.6" y="152.2" width="3.6" height="3.6"/><rect x="18.4" y="145.2" width="3.6" height="3.6"/><path d="M12.4 141.2 V145.2 M12.4 148.8 V152.2 M14.2 147 H18.4" fill="none" stroke-width="0.9"/></g>
<path d="M83.4 146.0 v-8.6 h3.5 l1.4 1.6 h4.7 v7.0 z" fill="#f3dc9c" stroke="#c7ab62" stroke-width="0.7"/><path d="M83.4 140.4 h9.6 v5.6 h-9.6 z" fill="url(#gFolder)" stroke="#c7ab62" stroke-width="0.7"/>
<path d="M86.6 149.6 v-8.6 h3.5 l1.4 1.6 h4.7 v7.0 z" fill="#f3dc9c" stroke="#c7ab62" stroke-width="0.7"/><path d="M86.6 144.0 h9.6 v5.6 h-9.6 z" fill="url(#gFolder)" stroke="#c7ab62" stroke-width="0.7"/>
<path d="M90.4 154.8 v-9.6 h4.0 l1.4 1.6 h5.6 v8.0 z" fill="#f3dc9c" stroke="#c7ab62" stroke-width="0.7"/><path d="M90.4 148.2 h11.0 v6.6 h-11.0 z" fill="url(#gFolder)" stroke="#c7ab62" stroke-width="0.7"/>
<path d="M160.0 154.4 v-14.6 h5.5 l1.4 1.6 h8.5 v13.0 z" fill="#f3dc9c" stroke="#c7ab62" stroke-width="0.7"/><path d="M160.0 142.8 h15.4 v11.6 h-15.4 z" fill="url(#gFolder)" stroke="#c7ab62" stroke-width="0.7"/>
<path d="M167.7 145.6 V151.6 M164.7 148.6 H170.7 M165.6 146.5 L169.8 150.7 M169.8 146.5 L165.6 150.7" stroke="#222" stroke-width="0.9"/>
<path d="M109.8 168.6 C110.6 166.6 112.6 165.8 114.6 166 L118.6 166.4 V170.4 L116.6 170.2 V171.4 H112.8 V169.6 C111.8 169.2 110.6 169 109.8 168.6 Z" fill="#6a6a6a" stroke="#3e3e3e" stroke-width="0.7" stroke-linejoin="round"/>
<rect x="112.8" y="171.4" width="3.8" height="13.8" rx="1" fill="url(#gHandle)" stroke="#a88a48" stroke-width="0.6"/>
<path d="M123.4 166.2 V176.6" stroke="#555" stroke-width="1.3"/><rect x="121.8" y="176.6" width="3.2" height="8.6" rx="1.2" fill="url(#gHandle)" stroke="#a88a48" stroke-width="0.6"/>
<path d="M152.6 167 H163.6 L167.6 171 V185.4 H152.6 Z" fill="#fafafa" stroke="#9d9d9d" stroke-width="0.9" stroke-linejoin="round"/><path d="M163.6 167 V171 H167.6" fill="none" stroke="#9d9d9d" stroke-width="0.8"/>
<g fill="none" stroke="#666" stroke-width="0.9"><circle cx="156.4" cy="173.6" r="1"/><circle cx="156.4" cy="177.6" r="1"/><circle cx="156.4" cy="181.6" r="1"/><path d="M159.2 173.6 H165 M159.2 177.6 H165 M159.2 181.6 H165"/></g>
<g fill="none" stroke="#c4c4c4" stroke-width="0.9"><rect x="197.6" y="167" width="3.6" height="3.6"/><rect x="197.6" y="174" width="3.6" height="3.6"/><rect x="197.6" y="181" width="3.6" height="3.6"/><rect x="205.4" y="167" width="3.6" height="3.6" stroke-dasharray="1 1"/><rect x="205.4" y="174" width="3.6" height="3.6" stroke-dasharray="1 1"/><rect x="211.6" y="167" width="3.6" height="9" stroke-dasharray="1 1"/><path d="M206.6 181.6 C209 178.6 213.6 178.6 216.4 181.6 C213.6 184.6 209 184.6 206.6 181.6 Z" stroke="#a9a9a9"/><circle cx="211.5" cy="181.6" r="1.2" fill="#a9a9a9" stroke="none"/><path d="M207 177.6 L216.6 185.6" stroke="#a9a9a9"/></g>
<g stroke="#4a9ec4" stroke-width="0.8" stroke-linejoin="round"><path d="M12.4 200.2 h8.8 v8.8 h-8.8 z" fill="#dcf3fc"/><path d="M12.4 200.2 l3.4 -3.4 h8.8 l-3.4 3.4 z" fill="#bfe6f6"/><path d="M21.2 200.2 l3.4 -3.4 v8.8 l-3.4 3.4 z" fill="#5faed2"/></g>
<path d="M17.4 223.6 L23.8 227.4 L17.4 231.2 Z" fill="#8d8d8d"/>
<path d="M17.4 342.8 L23.8 346.6 L17.4 350.4 Z" fill="#8d8d8d"/>
<path d="M32 222.4 C32 227 33.4 229.6 36.6 229.8" fill="none" stroke="#555" stroke-width="1"/><path d="M36.4 228.6 L38.8 225.4 H46.6 V231.8 H38.8 Z" fill="#fdf7ec" stroke="#8a6a4a" stroke-width="0.9" stroke-linejoin="round"/><circle cx="39.6" cy="228.6" r="0.8" fill="#333"/>
<path d="M34.8 246.4 h10.6 l-3.4 8.4 h-10.6 z" fill="#fffaf0" stroke="#6b5a3a" stroke-width="1.1" stroke-linejoin="miter"/>
<path d="M34.8 270.4 h10.6 l-3.4 8.4 h-10.6 z" fill="#fffaf0" stroke="#6b5a3a" stroke-width="1.1" stroke-linejoin="miter"/>
<path d="M34.8 294.4 h10.6 l-3.4 8.4 h-10.6 z" fill="#fffaf0" stroke="#6b5a3a" stroke-width="1.1" stroke-linejoin="miter"/>
<g stroke-linecap="round"><path d="M32.3 323.0 h12" stroke="#555" stroke-width="0.9"/><path d="M35.8 316.0 l6 15 M41.9 316.0 l-6.5 14.5" stroke="#a08a55" stroke-width="1.1"/></g><g font-family="Liberation Sans,sans-serif" font-size="7" font-weight="bold" fill="#333"><text x="30.5" y="320.4">y</text><text x="30.7" y="331.6">z</text><text x="44.3" y="325.6">x</text></g>
<g transform="translate(31.2 339.0) scale(1.00)" stroke-linejoin="round"><path d="M0.5 6.5 L6.5 0.5 H15.5 V8.5 L9.5 14.5 H0.5 Z" fill="#a9dcf2" stroke="#9cc3d6" stroke-width="0.8"/><path d="M6.5 0.5 H15.5 V8.5 L9.5 14.5 V6.5 Z" fill="#4fa7d0"/><path d="M6.5 0.5 H15.5 L9.5 6.5 H0.5 Z" fill="#8fd0ec"/><path d="M0.5 6.5 H9.5 V14.5 H0.5 Z" fill="#fdfdfd" stroke="#b5c6cf" stroke-width="0.8"/></g>
<path d="M33 364.4 L39.6 362.4 V373.6 L33 376.6 Z" fill="#ccd8e0" stroke="#8d9ba6" stroke-width="0.8" stroke-linejoin="round"/>
<path d="M33 376.6 L39.6 373.6 L46.6 375.2 L39.4 378.4 Z" fill="#7fd6d6" stroke="#1f6a78" stroke-width="0.9" stroke-linejoin="round"/>
<g transform="translate(31.0 386.2) scale(0.60)"><path d="M9.2 0 H23.3 V9 C23.3 14 20 19.5 18.5 19.5 H14 C12.5 19.5 9.2 14 9.2 9 Z" fill="url(#gPunch)" stroke="#bdbdbd" stroke-width="0.5"/><path d="M0 12.4 H3 L12.5 21.5 H20 L29.5 12.4 H32 V16.5 H30.5 L21 26 H11.5 L2 16.5 H0 Z" fill="#b9dcaa" stroke="#7fae6c" stroke-width="0.8" stroke-linejoin="round"/><path d="M0 14.6 H2.5 L12 23.8 H20.5 L30 14.6 H32" fill="none" stroke="#8fbd7d" stroke-width="0.7"/></g>
<path d="M33.8 417.6 H38.4 V414.6 L43.6 419.4 L38.4 424.2 V421.2 H33.8 Z" fill="#0b8a1b" stroke="#0a5a14" stroke-width="0.6"/>
<rect x="883.4" y="148.0" width="13.6" height="11.6" fill="#f4f4f4" stroke="#9d9d9d" stroke-width="0.9"/><path d="M894.2 157.6 l4.6 4.8" stroke="#b9b9b9" stroke-width="2.6" stroke-linecap="round"/><circle cx="890.8" cy="154.0" r="4.8" fill="#eaf6fb" stroke="#5f98b4" stroke-width="1.1"/>
<path d="M919.6 157.0 l4.6 4.8" stroke="#b9b9b9" stroke-width="2.6" stroke-linecap="round"/><circle cx="916.2" cy="153.4" r="4.8" fill="#eaf6fb" stroke="#5f98b4" stroke-width="1.1"/><path d="M913.4 153.4 h5.6 M916.2 150.6 v5.6" stroke="#1d6d98" stroke-width="1.6"/>
<path d="M945.6 157.0 l4.6 4.8" stroke="#b9b9b9" stroke-width="2.6" stroke-linecap="round"/><circle cx="942.2" cy="153.4" r="4.8" fill="#eaf6fb" stroke="#5f98b4" stroke-width="1.1"/><path d="M939.4 153.4 h5.6" stroke="#1d6d98" stroke-width="1.6"/>
<rect x="961.6" y="147.6" width="14.4" height="13.6" fill="#e9f6fc" stroke="#7d97a6" stroke-width="0.9"/><path d="M976 147.6 V161.2 H961.6 Z" fill="#6fb4d6"/><path d="M963.4 159.6 L973.6 150" stroke="#222" stroke-width="1.4"/>
<path d="M987.6 151.6 L991.2 147.4 H1002 V157.4 L998.4 161.6 H987.6 Z" fill="#7cc0e2" stroke="#1e6e98" stroke-width="1.1" stroke-linejoin="round"/><path d="M987.6 151.6 H998.4 V161.6 H987.6 Z" fill="#fdfdfd" stroke="#1e6e98" stroke-width="1.1"/><path d="M998.4 151.6 L1002 147.4" stroke="#1e6e98" stroke-width="1"/>
<path d="M1004.2 160.6 v3 h-3 z" fill="#555"/>
<path d="M1014.6 151 L1017.6 147.6 H1028.2 V156.8 L1025.2 160.2 H1014.6 Z" fill="#c5e5f3" stroke="#a9c1cc" stroke-width="0.8"/><path d="M1014.6 151 H1025.2 V160.2 H1014.6 Z" fill="#f7fbfd" stroke="#a9c1cc" stroke-width="0.8"/>
<rect x="1022" y="154.4" width="7.6" height="8.4" fill="#fafafa" stroke="#777" stroke-width="0.8"/><path d="M1023.6 156.8 H1028 M1023.6 158.8 H1028 M1023.6 160.8 H1028" stroke="#777" stroke-width="0.7"/>
<path d="M1032.2 160.6 v3 h-3 z" fill="#555"/>
<rect x="1041.6" y="146.6" width="12.6" height="13" fill="#fbfbfb" stroke="#9d9d9d" stroke-width="0.8"/><path d="M1041.6 150 H1054.2 M1041.6 153.2 H1054.2 M1041.6 156.4 H1054.2 M1046 146.6 V159.6" stroke="#b4b4b4" stroke-width="0.7"/>
<rect x="1046.6" y="155.8" width="10.2" height="6.6" rx="0.8" fill="#3a3a3a"/><rect x="1049.4" y="154.6" width="3.6" height="1.6" fill="#3a3a3a"/><circle cx="1051.6" cy="159.2" r="2" fill="#d9d9d9" stroke="#111" stroke-width="0.6"/>
<g stroke-linecap="round"><path d="M1068 147.2 L1071 150.2 M1071 147.2 L1068 150.2" stroke="#8a6a2a" stroke-width="1.1"/><path d="M1076.6 146.6 L1074.6 151 M1073.6 153.4 L1071.6 158 M1070.6 160 L1069.6 162.4" stroke="#333" stroke-width="1.2"/><path d="M1074.6 158.2 H1083.4 M1076.6 153.6 L1081.6 162.8 M1081.6 153.6 L1076.6 162.8" stroke="#a08a3a" stroke-width="1.1"/></g>
<path d="M1086.4 160.6 v3 h-3 z" fill="#555"/>
<path d="M1097.6 149.6 L1104 154.6 L1097.6 159.8 M1104 154.6 L1107.6 153.4" fill="none" stroke="#555" stroke-width="1"/><circle cx="1097.4" cy="149.4" r="2.2" fill="#7fb87f" stroke="#4e8a4e" stroke-width="0.5"/><circle cx="1097.4" cy="160" r="2.2" fill="#6fa9d4" stroke="#3f7aa8" stroke-width="0.5"/><circle cx="1108" cy="153.4" r="2.2" fill="#e58a8a" stroke="#b85a5a" stroke-width="0.5"/>
<rect x="1120.6" y="146.8" width="8.6" height="5.6" fill="#fdfdf6" stroke="#8a7a4a" stroke-width="0.8"/><path d="M1129.2 149.6 H1134 V152.4" fill="none" stroke="#333" stroke-width="1"/><path d="M1131.6 151.8 H1136.4 L1134 154.6 Z" fill="#333"/>
<path d="M1127 159.6 C1129.6 156.4 1134.4 156.4 1137 159.6 C1134.4 162.8 1129.6 162.8 1127 159.6 Z" fill="#fafafa" stroke="#333" stroke-width="1"/><circle cx="1132" cy="159.6" r="1.6" fill="#222"/>
<path d="M1139.6 160.6 v3 h-3 z" fill="#555"/>
<path d="M1147.6 147 H1156.6 L1158.6 150.4 H1162 V158 H1147.6 Z" fill="#b9e2b9" stroke="#4e8a5a" stroke-width="0.9" stroke-dasharray="1.6 1" stroke-linejoin="round"/><path d="M1148.6 148.4 L1157 156.8" stroke="#3f7a6a" stroke-width="0.8"/>
<g fill="#f6f6f6" stroke="#3a3a3a" stroke-width="1"><circle cx="1153" cy="160" r="2.6"/><circle cx="1160.4" cy="160" r="2.6"/><path d="M1155.6 159.6 H1157.8" fill="none"/></g>
<g fill="none" stroke-linecap="round"><path d="M1285 876 C1288 862 1275 848 1262 847.5 C1252 847.5 1249 856 1254.5 866 C1257 870.5 1260 874.5 1263.5 877.5" stroke="#2f4468" stroke-width="2.8"/><path d="M1289 868 C1285 862 1283 866 1284 872" stroke="#33466a" stroke-width="1.6"/><path d="M1283 869 C1290 862 1303 861 1304 870 C1304.6 882 1292 896 1283 897.5 C1279 897.5 1276.5 894.5 1276.5 891.5" stroke="#a5313a" stroke-width="3"/><path d="M1281 880 C1272 873 1259 877 1258 885 C1257.6 890 1262 892 1266 889.5" stroke="#5d6474" stroke-width="2"/><path d="M1269 879.5 C1265 876 1262 877 1263 880.5" stroke="#5d6474" stroke-width="1.4"/></g>
<g fill="none" stroke="#ee1c24" stroke-linecap="round" stroke-linejoin="round">
<path d="M93.5 391.8 C100 395 108 397.5 125 398.6 C160 400 200 399 229 399 C260 399 300 400 330 402" stroke-width="6.6"/>
<path d="M330 402 C370 404 410 409 440 414 C460 417 475 419 489 420.2" stroke-width="5.6"/>
<path d="M470 391 C483 402 497 413 510.5 423.3 C500 427.5 490 431.5 480.5 435.2" stroke-width="5.6"/>
</g>
</svg>
</body></html>
